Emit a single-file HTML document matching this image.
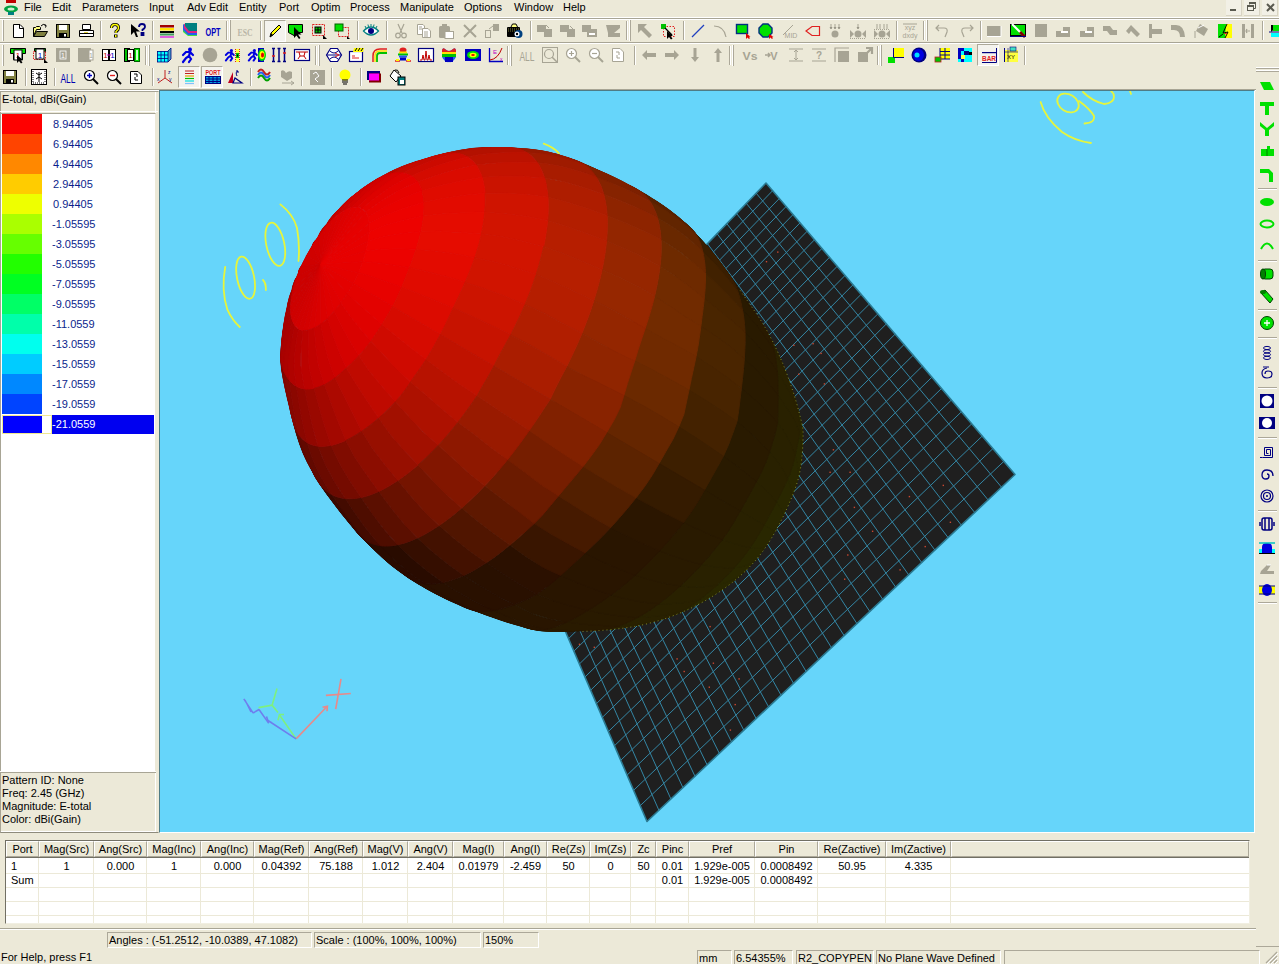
<!DOCTYPE html><html><head><meta charset="utf-8"><style>
*{margin:0;padding:0;box-sizing:border-box}
html,body{width:1279px;height:964px;overflow:hidden;background:#ECE9D8;font-family:"Liberation Sans", sans-serif;font-size:11px;color:#000;position:relative}
.a{position:absolute}
.t{position:absolute;white-space:nowrap;line-height:1;font-size:11px}
.hl{position:absolute;height:1px}
.vl{position:absolute;width:1px}
svg{position:absolute;overflow:visible}
</style></head><body>
<div class="t" style="left:24px;top:2px;font-size:11px">File</div>
<div class="t" style="left:52px;top:2px;font-size:11px">Edit</div>
<div class="t" style="left:82px;top:2px;font-size:11px">Parameters</div>
<div class="t" style="left:149px;top:2px;font-size:11px">Input</div>
<div class="t" style="left:187px;top:2px;font-size:11px">Adv Edit</div>
<div class="t" style="left:239px;top:2px;font-size:11px">Entity</div>
<div class="t" style="left:279px;top:2px;font-size:11px">Port</div>
<div class="t" style="left:311px;top:2px;font-size:11px">Optim</div>
<div class="t" style="left:350px;top:2px;font-size:11px">Process</div>
<div class="t" style="left:400px;top:2px;font-size:11px">Manipulate</div>
<div class="t" style="left:464px;top:2px;font-size:11px">Options</div>
<div class="t" style="left:514px;top:2px;font-size:11px">Window</div>
<div class="t" style="left:563px;top:2px;font-size:11px">Help</div>
<svg style="left:2px;top:0" width="18" height="16" viewBox="0 0 18 16">
<rect x="4" y="0" width="10" height="3" fill="#c00000"/>
<ellipse cx="9" cy="9" rx="7" ry="3.5" fill="#00a040"/>
<ellipse cx="9" cy="9" rx="3.5" ry="1.6" fill="#d0f0d0"/>
<rect x="6" y="12" width="6" height="3" fill="#008080"/>
</svg>
<div class="a" style="left:1226px;top:0;width:16px;height:16px;background:#F2F0E6;border-right:1px solid #D8D4C4;border-bottom:1px solid #D8D4C4"></div>
<div class="a" style="left:1244px;top:0;width:16px;height:16px;background:#F2F0E6;border-right:1px solid #D8D4C4;border-bottom:1px solid #D8D4C4"></div>
<div class="a" style="left:1262px;top:0;width:16px;height:16px;background:#F2F0E6;border-right:1px solid #D8D4C4;border-bottom:1px solid #D8D4C4"></div>
<div class="a" style="left:1230px;top:9px;width:6px;height:2px;background:#5a5a50"></div>
<svg style="left:1247px;top:2px" width="10" height="10"><rect x="0.5" y="3.5" width="6" height="5" fill="none" stroke="#5a5a50"/><rect x="0" y="3" width="7" height="2" fill="#5a5a50"/><path d="M2.5 2.5V0.5H8.5V6.5H7" fill="none" stroke="#5a5a50"/><rect x="2" y="0" width="7" height="2" fill="#5a5a50"/></svg>
<svg style="left:1266px;top:3px" width="9" height="9"><path d="M1 1L8 8M8 1L1 8" stroke="#5a5a50" stroke-width="2"/></svg>
<div class="hl" style="left:0;top:17px;width:1279px;background:#FFFFFF"></div>
<div class="hl" style="left:0;top:18px;width:1279px;background:#A8A595"></div>
<div class="hl" style="left:0;top:19px;width:1279px;background:#FFFFFF"></div>
<div class="hl" style="left:0;top:42px;width:1279px;background:#A8A595"></div>
<div class="hl" style="left:0;top:43px;width:1279px;background:#FFFFFF"></div>
<div class="hl" style="left:0;top:89px;width:1256px;background:#A8A595"></div>
<div class="hl" style="left:0;top:90px;width:1256px;background:#FFFFFF"></div>
<div class="a" style="left:2px;top:20px;width:2px;height:21px;border-left:1px solid #fff;border-right:1px solid #ACA899"></div>
<svg style="left:10px;top:23px" width="16" height="16" viewBox="0 0 16 16"><path d="M3.5 1.5H10L13.5 5V14.5H3.5Z" fill="#fff" stroke="#000"/><path d="M9.5 1.5V5.5H13.5" fill="none" stroke="#000"/></svg>
<svg style="left:32px;top:23px" width="16" height="16" viewBox="0 0 16 16"><path d="M1.5 6.5V13.5H12.5L15.5 8.5H4.5L1.5 13.5" fill="#808040" stroke="#000"/><path d="M1.5 13V4.5H3.5L4.5 3.5H7.5L8.5 4.5V6.5H4.5Z" fill="#FFFF80" stroke="#000"/><path d="M9 3Q11 0 14 2.5M12.5 1.5L14.2 2.6L13.5 4.5" fill="none" stroke="#000"/></svg>
<svg style="left:55px;top:23px" width="16" height="16" viewBox="0 0 16 16"><rect x="1.5" y="1.5" width="13" height="13" fill="#808040" stroke="#000"/><rect x="4" y="2" width="8" height="5" fill="#fff"/><rect x="4" y="10" width="8" height="4.5" fill="#000"/><rect x="9" y="11" width="2" height="2.5" fill="#fff"/></svg>
<svg style="left:78px;top:23px" width="16" height="16" viewBox="0 0 16 16"><path d="M4.5 1.5H12.5V6.5H4.5Z" fill="#fff" stroke="#000"/><path d="M1.5 7.5H15.5V13.5H1.5Z" fill="#fff" stroke="#000"/><rect x="2" y="10" width="13" height="1" fill="#000"/><rect x="6" y="9" width="4" height="1" fill="#E0D040"/></svg>
<div class="vl" style="left:100px;top:21px;height:19px;background:#ACA899"></div><div class="vl" style="left:101px;top:21px;height:19px;background:#fff"></div>
<svg style="left:107px;top:23px" width="16" height="16" viewBox="0 0 16 16"><path d="M4.5 5Q4.5 1.5 8 1.5Q11.5 1.5 11.5 5Q11.5 7 9 8.5V10" fill="none" stroke="#000" stroke-width="3"/><path d="M4.5 5Q4.5 1.5 8 1.5Q11.5 1.5 11.5 5Q11.5 7 9 8.5V10" fill="none" stroke="#FFFF00" stroke-width="1.4"/><rect x="7" y="11.5" width="3.5" height="3" fill="#000"/><rect x="8" y="12" width="1.5" height="2" fill="#FFFF00"/></svg>
<svg style="left:130px;top:23px" width="16" height="16" viewBox="0 0 16 16"><path d="M1 1V12L4 9L6 14H8L6 8.5H10Z" fill="#000"/><path d="M9 4Q9 1 12 1Q15 1 15 3.5Q15 5.5 12.5 6.5V8M11.5 10H13.5V12H11.5Z" fill="none" stroke="#000080" stroke-width="1.8"/></svg>
<div class="vl" style="left:152px;top:21px;height:19px;background:#ACA899"></div><div class="vl" style="left:153px;top:21px;height:19px;background:#fff"></div>
<svg style="left:159px;top:23px" width="16" height="16" viewBox="0 0 16 16"><rect x="1" y="2" width="14" height="2.5" fill="#A00000"/><rect x="1" y="5" width="14" height="2.5" fill="#FFE000"/><rect x="1" y="8" width="14" height="2" fill="#000"/><rect x="1" y="10.5" width="14" height="2" fill="#40A060"/><rect x="1" y="13" width="14" height="2" fill="#E060E0"/></svg>
<svg style="left:182px;top:23px" width="16" height="16" viewBox="0 0 16 16"><path d="M1 1L6 7L15 7V13H6L1 9Z" fill="#40E040"/><path d="M1 1L6 6H15V12H6L1 7Z" fill="#2060F0"/><path d="M2 0.5L6 4H15V10H6L2 5Z" fill="#E02080"/><path d="M3 0H15V8H7L3 3Z" fill="#008080"/></svg>
<svg style="left:205px;top:23px" width="16" height="16" viewBox="0 0 16 16"><text x="8" y="12.5" font-family="Liberation Sans" font-weight="bold" font-size="10" fill="#0000C0" text-anchor="middle" textLength="15" lengthAdjust="spacingAndGlyphs">OPT</text></svg>
<div class="vl" style="left:226px;top:21px;height:19px;background:#ACA899"></div><div class="vl" style="left:227px;top:21px;height:19px;background:#fff"></div>
<div class="a" style="left:229px;top:20px;width:2px;height:21px;border-left:1px solid #fff;border-right:1px solid #ACA899"></div>
<svg style="left:237px;top:23px" width="16" height="16" viewBox="0 0 16 16"><text x="8" y="13" font-family="Liberation Serif" font-weight="bold" font-size="11" fill="#B8B5A6" text-anchor="middle" textLength="15" lengthAdjust="spacingAndGlyphs">ESC</text></svg>
<div class="vl" style="left:260px;top:21px;height:19px;background:#ACA899"></div><div class="vl" style="left:261px;top:21px;height:19px;background:#fff"></div>
<div class="a" style="left:264px;top:20px;width:22px;height:22px;background:#F4F3EE;border-left:1px solid #ACA899;border-top:1px solid #ACA899;border-right:1px solid #fff;border-bottom:1px solid #fff"></div>
<svg style="left:267px;top:23px" width="16" height="16" viewBox="0 0 16 16"><path d="M3 14L4 10L12 2L14 4L6 12Z" fill="#FFFF00" stroke="#000"/><path d="M3 14L4 10L6 12Z" fill="#000"/></svg>
<svg style="left:288px;top:23px" width="16" height="16" viewBox="0 0 16 16"><path d="M0.5 1.5H14.5V9.5H8L6 12.5L0.5 9.5Z" fill="#00E000" stroke="#000"/><path d="M6 4L6 15L8.5 12.5L11 16L12.5 15L10 11.5H13.5Z" fill="#000"/></svg>
<svg style="left:311px;top:23px" width="16" height="16" viewBox="0 0 16 16"><rect x="1.5" y="1.5" width="12" height="11" fill="none" stroke="#E02020" stroke-dasharray="2 1"/><rect x="4" y="4" width="6" height="6" fill="#00C000" stroke="#000"/><path d="M7 4V10M4 7H10" stroke="#000"/><path d="M12 12L16 16H12Z" fill="#000"/></svg>
<svg style="left:334px;top:23px" width="16" height="16" viewBox="0 0 16 16"><rect x="4.5" y="4.5" width="10" height="9" fill="none" stroke="#E02020" stroke-dasharray="2 1"/><rect x="1" y="1" width="8" height="7" fill="#00E000" stroke="#006000"/><path d="M13 13L16 16H13Z" fill="#000"/></svg>
<div class="vl" style="left:357px;top:21px;height:19px;background:#ACA899"></div><div class="vl" style="left:358px;top:21px;height:19px;background:#fff"></div>
<svg style="left:363px;top:23px" width="16" height="16" viewBox="0 0 16 16"><path d="M0.5 8Q8 0 15.5 8Q8 16 0.5 8Z" fill="#fff" stroke="#008080" stroke-width="1.3"/><circle cx="8" cy="8" r="3" fill="#000080"/><path d="M2 3L3 5M5 1.5L5.5 4M8 1V3.5M11 1.5L10.5 4M14 3L13 5" stroke="#008080"/></svg>
<div class="vl" style="left:386px;top:21px;height:19px;background:#ACA899"></div><div class="vl" style="left:387px;top:21px;height:19px;background:#fff"></div>
<svg style="left:393px;top:23px" width="16" height="16" viewBox="0 0 16 16"><path d="M5 1L9 10M11 1L7 10" stroke="#A7A494" stroke-width="1.2"/><circle cx="5" cy="12.5" r="2.3" fill="none" stroke="#A7A494" stroke-width="1.2"/><circle cx="11" cy="12.5" r="2.3" fill="none" stroke="#A7A494" stroke-width="1.2"/></svg>
<svg style="left:416px;top:23px" width="16" height="16" viewBox="0 0 16 16"><path d="M1.5 1.5H7L8.5 3V11.5H1.5Z" fill="#fff" stroke="#A7A494"/><path d="M6.5 5.5H12L14.5 8V14.5H6.5Z" fill="#fff" stroke="#A7A494"/><path d="M3 4H6M3 6H6M8 9H12M8 11H12M8 13H12" stroke="#A7A494"/></svg>
<svg style="left:438px;top:23px" width="16" height="16" viewBox="0 0 16 16"><rect x="1" y="3" width="11" height="12" rx="1.5" fill="#A7A494"/><rect x="4" y="1" width="5" height="3" fill="#A7A494"/><rect x="7" y="8.5" width="8.5" height="7" fill="#fff" stroke="#A7A494"/></svg>
<svg style="left:462px;top:23px" width="16" height="16" viewBox="0 0 16 16"><path d="M2 2L14 14M14 2L2 14" stroke="#A7A494" stroke-width="2"/></svg>
<svg style="left:484px;top:23px" width="16" height="16" viewBox="0 0 16 16"><rect x="1.5" y="7.5" width="5" height="7" fill="none" stroke="#A7A494"/><rect x="9" y="1" width="6" height="7" fill="#A7A494"/><path d="M5 6L9 3" stroke="#A7A494"/></svg>
<svg style="left:507px;top:23px" width="16" height="16" viewBox="0 0 16 16"><rect x="0" y="4" width="13" height="10" rx="1" fill="#000"/><path d="M4 4L5.5 1H9L10.5 4" fill="#FFFF80" stroke="#000"/><circle cx="11.5" cy="11" r="4" fill="#004080"/><circle cx="10" cy="11" r="2.5" fill="#fff"/><circle cx="10" cy="11" r="1.2" fill="#000"/><path d="M1 6H12M1 8H8" stroke="#808040" stroke-dasharray="1 1"/></svg>
<div class="vl" style="left:530px;top:21px;height:19px;background:#ACA899"></div><div class="vl" style="left:531px;top:21px;height:19px;background:#fff"></div>
<svg style="left:537px;top:23px" width="16" height="16" viewBox="0 0 16 16"><path d="M0 2H9V6H15V14H7V9H0Z" fill="#A7A494"/><path d="M9 2L12 5" stroke="#A7A494"/></svg>
<svg style="left:560px;top:23px" width="16" height="16" viewBox="0 0 16 16"><path d="M0 2H9V6H15V14H7V9H0Z" fill="#A7A494"/><path d="M10 3L13 6" stroke="#A7A494"/></svg>
<svg style="left:582px;top:23px" width="16" height="16" viewBox="0 0 16 16"><path d="M0 2H9V6H15V14H5V9H0Z" fill="#A7A494"/><rect x="7" y="10" width="6" height="2" fill="#fff"/></svg>
<svg style="left:605px;top:23px" width="16" height="16" viewBox="0 0 16 16"><path d="M1 2H15V5L9 10H15V14H3V10Z" fill="#A7A494"/></svg>
<div class="vl" style="left:626px;top:21px;height:19px;background:#ACA899"></div><div class="vl" style="left:627px;top:21px;height:19px;background:#fff"></div>
<div class="a" style="left:629px;top:20px;width:2px;height:21px;border-left:1px solid #fff;border-right:1px solid #ACA899"></div>
<svg style="left:637px;top:23px" width="16" height="16" viewBox="0 0 16 16"><path d="M1 1H10L7 4L15 12L12 15L4 7L1 10Z" fill="#A7A494"/></svg>
<svg style="left:660px;top:23px" width="16" height="16" viewBox="0 0 16 16"><rect x="3.5" y="3.5" width="11" height="10" fill="none" stroke="#E02020" stroke-dasharray="1.5 1.5"/><rect x="1" y="1" width="5" height="5" fill="#00C000"/><path d="M5 5L12 12" stroke="#000" stroke-width="1.2"/><path d="M7 8V16L9 14L11 16.5L12.5 15.5L10.5 13H13Z" fill="#000"/></svg>
<div class="vl" style="left:683px;top:21px;height:19px;background:#ACA899"></div><div class="vl" style="left:684px;top:21px;height:19px;background:#fff"></div>
<svg style="left:690px;top:23px" width="16" height="16" viewBox="0 0 16 16"><path d="M2 14L14 2" stroke="#2040C0" stroke-width="1.2"/></svg>
<svg style="left:712px;top:23px" width="16" height="16" viewBox="0 0 16 16"><path d="M2 3Q12 3 14 14" fill="none" stroke="#A7A494" stroke-width="1.2"/></svg>
<svg style="left:735px;top:23px" width="16" height="16" viewBox="0 0 16 16"><rect x="1.5" y="1.5" width="11" height="9" fill="#00E000" stroke="#003080" stroke-width="1.4"/><path d="M11 10L11 16L12.5 14.5L14 16L15 15L13.8 13.7H15.5Z" fill="#E00000"/></svg>
<svg style="left:758px;top:23px" width="16" height="16" viewBox="0 0 16 16"><path d="M5 1H10L14 5V10L10 14H5L1 10V5Z" fill="#00E000" stroke="#003080" stroke-width="1.4"/><path d="M11 11L11 16L12.5 14.5L14 16L15 15L13.8 13.7H15.5Z" fill="#E00000"/></svg>
<svg style="left:782px;top:23px" width="16" height="16" viewBox="0 0 16 16"><path d="M1 12L11 2" stroke="#A7A494"/><text x="9" y="14.5" font-family="Liberation Sans" font-size="7" fill="#A7A494" text-anchor="middle">MID</text></svg>
<svg style="left:805px;top:23px" width="16" height="16" viewBox="0 0 16 16"><path d="M1 8L7 3.5H14.5V12.5H7Z" fill="none" stroke="#E02020" stroke-width="1.2"/></svg>
<svg style="left:827px;top:23px" width="16" height="16" viewBox="0 0 16 16"><path d="M4 1V6M8 1V6M12 1V6M3 4L4 6L5 4M7 4L8 6L9 4M11 4L12 6L13 4" stroke="#A7A494"/><circle cx="8" cy="11" r="3.5" fill="#A7A494"/></svg>
<svg style="left:850px;top:23px" width="16" height="16" viewBox="0 0 16 16"><path d="M8 1V6M7 4L8 6L9 4" stroke="#A7A494"/><circle cx="8" cy="11" r="3.5" fill="#A7A494"/><path d="M0 7L4 11L0 15ZM16 7L12 11L16 15Z" fill="#A7A494"/><path d="M0 15.5H16" stroke="#A7A494" stroke-dasharray="1 1"/></svg>
<svg style="left:874px;top:23px" width="16" height="16" viewBox="0 0 16 16"><path d="M3 1V6M6 1V6M10 1V6M13 1V6" stroke="#A7A494"/><circle cx="8" cy="11" r="3.5" fill="#A7A494"/><path d="M0 7L4 11L0 15ZM16 7L12 11L16 15Z" fill="#A7A494"/><path d="M0 15.5H16M0 6.5H16" stroke="#A7A494" stroke-dasharray="1 1"/></svg>
<div class="vl" style="left:896px;top:21px;height:19px;background:#ACA899"></div><div class="vl" style="left:897px;top:21px;height:19px;background:#fff"></div>
<svg style="left:902px;top:23px" width="16" height="16" viewBox="0 0 16 16"><text x="8" y="7" font-family="Liberation Sans" font-size="7" fill="#A7A494" text-anchor="middle">xyz</text><text x="8" y="15" font-family="Liberation Sans" font-size="7" fill="#A7A494" text-anchor="middle">dxdy</text><path d="M1 1H15" stroke="#A7A494"/></svg>
<div class="vl" style="left:923px;top:21px;height:19px;background:#ACA899"></div><div class="vl" style="left:924px;top:21px;height:19px;background:#fff"></div>
<div class="a" style="left:926px;top:20px;width:2px;height:21px;border-left:1px solid #fff;border-right:1px solid #ACA899"></div>
<svg style="left:935px;top:23px" width="16" height="16" viewBox="0 0 16 16"><path d="M4 2L1 5L4 8M1 5H9Q13 5 12 9L10 14" fill="none" stroke="#A7A494" stroke-width="1.2"/></svg>
<svg style="left:958px;top:23px" width="16" height="16" viewBox="0 0 16 16"><path d="M12 2L15 5L12 8M15 5H7Q3 5 4 9L6 14" fill="none" stroke="#A7A494" stroke-width="1.2"/></svg>
<div class="vl" style="left:980px;top:21px;height:19px;background:#ACA899"></div><div class="vl" style="left:981px;top:21px;height:19px;background:#fff"></div>
<svg style="left:986px;top:23px" width="16" height="16" viewBox="0 0 16 16"><rect x="1" y="3" width="14" height="10" fill="#A7A494"/><path d="M1 13.5H15M15 3V13.5" stroke="#fff"/></svg>
<svg style="left:1010px;top:23px" width="16" height="16" viewBox="0 0 16 16"><rect x="0.5" y="1.5" width="15" height="11" fill="#00E000" stroke="#000"/><path d="M2 1L13 12" stroke="#fff" stroke-width="2"/><path d="M9 10L14 15L16 13L11 8Z" fill="#800000"/><rect x="0" y="13" width="16" height="1" fill="#000080"/></svg>
<svg style="left:1033px;top:23px" width="16" height="16" viewBox="0 0 16 16"><rect x="2" y="1" width="12" height="13" fill="#A7A494"/></svg>
<svg style="left:1055px;top:23px" width="16" height="16" viewBox="0 0 16 16"><path d="M1 8H8V4H15V14H1Z" fill="#A7A494"/><rect x="6" y="8" width="7" height="2" fill="#fff"/></svg>
<svg style="left:1079px;top:23px" width="16" height="16" viewBox="0 0 16 16"><path d="M1 8H8V4H15V14H1Z" fill="#A7A494"/><rect x="6" y="8" width="7" height="2" fill="#fff"/></svg>
<svg style="left:1102px;top:23px" width="16" height="16" viewBox="0 0 16 16"><path d="M1 3H8L11 7H15V12H8L5 8H1Z" fill="#A7A494"/></svg>
<svg style="left:1125px;top:23px" width="16" height="16" viewBox="0 0 16 16"><path d="M1 8L6 2L15 11L12 14L6 8L4 11Z" fill="#A7A494"/></svg>
<svg style="left:1147px;top:23px" width="16" height="16" viewBox="0 0 16 16"><path d="M2 1H5V6H15V11H5V15H2Z" fill="#A7A494"/></svg>
<svg style="left:1170px;top:23px" width="16" height="16" viewBox="0 0 16 16"><path d="M1 2H6Q14 2 15 14H10Q10 7 4 7H1Z" fill="#A7A494"/></svg>
<svg style="left:1194px;top:23px" width="16" height="16" viewBox="0 0 16 16"><path d="M6 1L14 6L10 13L2 8Z" fill="#A7A494"/><path d="M4 5L10 2" stroke="#fff"/><path d="M1 8V15" stroke="#A7A494"/></svg>
<svg style="left:1217px;top:23px" width="16" height="16" viewBox="0 0 16 16"><rect x="1" y="1" width="14" height="14" fill="#00E000"/><path d="M9 1H15V15H8Z" fill="#FFFF00"/><path d="M10 1L6 10L11 9L8 15" fill="none" stroke="#000"/><path d="M2 14L6 11" stroke="#000"/><path d="M7 10L10 11" stroke="#E02020"/></svg>
<svg style="left:1240px;top:23px" width="16" height="16" viewBox="0 0 16 16"><path d="M2 1H5V15H2ZM11 1H14V15H11Z" fill="#A7A494"/><path d="M6 8L10 8M7 6L6 8L7 10" stroke="#A7A494" stroke-width="1.2"/></svg>
<div class="vl" style="left:1262px;top:21px;height:19px;background:#ACA899"></div><div class="vl" style="left:1263px;top:21px;height:19px;background:#fff"></div>
<svg style="left:1269px;top:23px" width="16" height="16" viewBox="0 0 16 16"><path d="M2 2L10 2L2 9Z" fill="#000"/><path d="M4 2H10V8H4Z" fill="#00E000"/><rect x="2" y="10" width="8" height="4" fill="#00FFFF"/><path d="M0 9H10" stroke="#000080"/></svg>
<div class="a" style="left:2px;top:45px;width:2px;height:21px;border-left:1px solid #fff;border-right:1px solid #ACA899"></div>
<svg style="left:10px;top:47px" width="16" height="16" viewBox="0 0 16 16"><path d="M0.5 1.5H15.5V6.5H12.5V12.5H3.5V6.5H0.5Z" fill="#00E000" stroke="#000"/><rect x="4" y="3" width="8" height="10" fill="#fff" stroke="#000"/><text x="8" y="11" font-family="Liberation Sans" font-size="8" fill="#E00000" text-anchor="middle">1</text><path d="M7 8L7 16L9 14L11 16.5L12.5 15.5L10.5 13H13Z" fill="#000"/></svg>
<svg style="left:32px;top:47px" width="16" height="16" viewBox="0 0 16 16"><path d="M2.5 1.5H13.5V4.5H2.5Z" fill="#00E000" stroke="#000"/><rect x="1.5" y="4.5" width="12" height="8" fill="none" stroke="#E02020" stroke-dasharray="1.5 1"/><rect x="4" y="2" width="8" height="10" fill="#fff" stroke="#000"/><text x="8" y="10.5" font-family="Liberation Sans" font-size="8" fill="#0000C0" text-anchor="middle">1</text><path d="M12 12L16 16H12Z" fill="#000"/></svg>
<svg style="left:55px;top:47px" width="16" height="16" viewBox="0 0 16 16"><rect x="1" y="1" width="14" height="14" fill="#A7A494"/><rect x="5" y="4" width="6" height="8" fill="none" stroke="#fff" stroke-width="0.8"/><text x="8" y="11" font-family="Liberation Sans" font-size="7" fill="#fff" text-anchor="middle">1</text></svg>
<svg style="left:78px;top:47px" width="16" height="16" viewBox="0 0 16 16"><rect x="0" y="1" width="13" height="14" fill="#A7A494"/><rect x="11" y="3" width="4" height="10" fill="#fff" stroke="#A7A494"/><text x="13" y="11" font-family="Liberation Sans" font-size="7" fill="#A7A494" text-anchor="middle">1</text></svg>
<svg style="left:101px;top:47px" width="16" height="16" viewBox="0 0 16 16"><rect x="1.5" y="2.5" width="6" height="11" fill="#fff" stroke="#000"/><rect x="8.5" y="2.5" width="6" height="11" fill="#fff" stroke="#000"/><text x="4.5" y="11" font-family="Liberation Sans" font-size="8" fill="#C00000" text-anchor="middle">1</text><text x="11.5" y="11" font-family="Liberation Sans" font-size="8" fill="#0000C0" text-anchor="middle">1</text><path d="M6 8H10" stroke="#C000C0"/></svg>
<svg style="left:124px;top:47px" width="16" height="16" viewBox="0 0 16 16"><rect x="0.5" y="1.5" width="5" height="13" fill="#00C000" stroke="#000"/><rect x="3.5" y="2.5" width="6" height="11" fill="#fff" stroke="#000"/><text x="6.5" y="11" font-family="Liberation Sans" font-size="8" fill="#C00000" text-anchor="middle">1</text><rect x="10.5" y="1.5" width="5" height="13" fill="#00E000" stroke="#006000"/><rect x="12" y="3" width="2" height="10" fill="#D0FFD0"/></svg>
<div class="vl" style="left:145px;top:46px;height:19px;background:#ACA899"></div><div class="vl" style="left:146px;top:46px;height:19px;background:#fff"></div>
<div class="a" style="left:148px;top:45px;width:2px;height:21px;border-left:1px solid #fff;border-right:1px solid #ACA899"></div>
<svg style="left:156px;top:47px" width="16" height="16" viewBox="0 0 16 16"><path d="M1 4H12L15 1V12L12 15H1Z" fill="#00FFFF"/><path d="M12 4L15 1V12L12 15Z" fill="#40A0C0"/><path d="M1 4.5H12M1 8H12M1 11.5H12M1 15H12M1.5 4V15M5 4V15M8.5 4V15M12 4V15M12 4L15 1V12L12 15" stroke="#000080" stroke-width="0.8" fill="none"/></svg>
<svg style="left:179px;top:47px" width="16" height="16" viewBox="0 0 16 16"><circle cx="11" cy="2.5" r="2" fill="#0000E0"/><path d="M7 5L11 5L10 9L12 12L10 15M10 9L7 11L4 15M7 5L4 8M11 5L14 8" fill="none" stroke="#0000E0" stroke-width="2.2" stroke-linecap="round"/></svg>
<svg style="left:202px;top:47px" width="16" height="16" viewBox="0 0 16 16"><circle cx="8" cy="8" r="7.3" fill="#A7A494"/></svg>
<svg style="left:225px;top:47px" width="16" height="16" viewBox="0 0 16 16"><g transform="scale(0.8) translate(0,2)"><circle cx="8" cy="2.5" r="2" fill="#0000E0"/><path d="M4 5L8 5L7 9L9 12L7 15M7 9L4 11L1 15M4 5L1 8M8 5L11 8" fill="none" stroke="#0000E0" stroke-width="2.4" stroke-linecap="round"/></g><rect x="11" y="2" width="3" height="13" fill="#FFFF40"/><rect x="11" y="6" width="3" height="5" fill="#00C000"/><rect x="12" y="7.5" width="1" height="2" fill="#000"/><path d="M10.5 2V15M14.5 2V15" stroke="#E02020" stroke-dasharray="1 1"/></svg>
<svg style="left:248px;top:47px" width="16" height="16" viewBox="0 0 16 16"><g transform="scale(0.8) translate(0,2)"><circle cx="8" cy="2.5" r="2" fill="#0000E0"/><path d="M4 5L8 5L7 9L9 12L7 15M7 9L4 11L1 15M4 5L1 8M8 5L11 8" fill="none" stroke="#0000E0" stroke-width="2.4" stroke-linecap="round"/></g><rect x="10" y="1" width="6" height="14" fill="#0000C0"/><ellipse cx="14" cy="8" rx="4" ry="6" fill="#00E000"/><ellipse cx="14" cy="8" rx="2.5" ry="4" fill="#FFFF00"/><ellipse cx="14.5" cy="8" rx="1.5" ry="2.5" fill="#E00000"/></svg>
<svg style="left:271px;top:47px" width="16" height="16" viewBox="0 0 16 16"><path d="M1 1.5H4M1 14.5H4M2.5 1.5V14.5M6.5 1.5H9.5M6.5 14.5H9.5M8 1.5V14.5M12 1.5H15M12 14.5H15M13.5 1.5V14.5" stroke="#000080" stroke-width="1.5"/><path d="M1 9H4M12 6H15" stroke="#E02020" stroke-width="1.5"/></svg>
<svg style="left:294px;top:47px" width="16" height="16" viewBox="0 0 16 16"><rect x="0.5" y="2.5" width="15" height="11" fill="#fff" stroke="#000080" stroke-width="1.2"/><path d="M2 5H14M5 5L6 9L4 12M11 5L10 9L12 12M6 9H10" fill="none" stroke="#C00000"/></svg>
<div class="vl" style="left:315px;top:46px;height:19px;background:#ACA899"></div><div class="vl" style="left:316px;top:46px;height:19px;background:#fff"></div>
<div class="a" style="left:318px;top:45px;width:2px;height:21px;border-left:1px solid #fff;border-right:1px solid #ACA899"></div>
<svg style="left:326px;top:47px" width="16" height="16" viewBox="0 0 16 16"><path d="M4.5 1.5H11.5L15.5 8L11.5 14.5H4.5L0.5 8Z" fill="#fff" stroke="#000080" stroke-width="1.2"/><path d="M1 8H15M4 4Q8 8 12 4M4 12Q8 8 12 12" fill="none" stroke="#000080"/><path d="M9 6L13 8L9 10" fill="none" stroke="#E02020"/></svg>
<svg style="left:349px;top:47px" width="16" height="16" viewBox="0 0 16 16"><rect x="0.5" y="4.5" width="13" height="10" fill="#fff" stroke="#000080" stroke-width="1.2"/><path d="M5 1L15 1L14 5L4 5Z" fill="#FFFF00"/><path d="M6 4L8 1M9 4L11 1M12 4L14 1" stroke="#000"/><path d="M3 9H6M3 11H10" stroke="#E02020"/></svg>
<svg style="left:372px;top:47px" width="16" height="16" viewBox="0 0 16 16"><path d="M1 15V9Q1 2 8 2H15" fill="none" stroke="#E02020" stroke-width="1.5"/><path d="M3 15V9Q3 4 8 4H15" fill="none" stroke="#FFE000" stroke-width="1.5"/><path d="M5 15V9Q5 6 8 6H15" fill="none" stroke="#00C000" stroke-width="1.8"/></svg>
<svg style="left:395px;top:47px" width="16" height="16" viewBox="0 0 16 16"><ellipse cx="8" cy="3" rx="3.5" ry="2.5" fill="#E02020"/><rect x="4" y="4.5" width="8" height="2" fill="#FFE000"/><rect x="3" y="6.5" width="10" height="2" fill="#00C000"/><rect x="4" y="8.5" width="8" height="2" fill="#2060F0"/><rect x="5" y="10.5" width="6" height="3" fill="#0000C0"/><path d="M0 14H5M11 14H16" stroke="#E02020" stroke-width="1.5"/><rect x="1" y="12" width="3" height="2" fill="#FFFF00"/><rect x="12" y="12" width="3" height="2" fill="#FFFF00"/></svg>
<svg style="left:418px;top:47px" width="16" height="16" viewBox="0 0 16 16"><rect x="0.5" y="1.5" width="15" height="13" fill="#fff" stroke="#000080" stroke-width="1.2"/><path d="M2 13H4L5 8L6 13H7L8 4L9 13H10L11 8L12 13H14" fill="none" stroke="#C00000"/></svg>
<svg style="left:441px;top:47px" width="16" height="16" viewBox="0 0 16 16"><path d="M1 3Q2 0 4 2Q8 6 12 2Q14 0 15 3V10Q12 16 8 15Q4 16 1 10Z" fill="#2060F0"/><path d="M1 3Q2 0 4 2Q8 6 12 2Q14 0 15 3V6H1Z" fill="#E02020"/><path d="M1 5H15V7H1Z" fill="#FFE000"/><path d="M1 7H15V10H1Z" fill="#00C000"/><path d="M4 10H12V15H4Z" fill="#0000C0"/></svg>
<svg style="left:465px;top:47px" width="16" height="16" viewBox="0 0 16 16"><rect x="0" y="2" width="16" height="12" fill="#0000C0"/><ellipse cx="8" cy="8" rx="6" ry="4" fill="#00E000"/><ellipse cx="8" cy="8" rx="3.5" ry="2.3" fill="#FFFF00"/><ellipse cx="8" cy="8" rx="1.8" ry="1" fill="#E00000"/></svg>
<svg style="left:488px;top:47px" width="16" height="16" viewBox="0 0 16 16"><path d="M1.5 1V14.5H15" fill="none" stroke="#0000C0" stroke-width="1.3"/><path d="M2 13Q10 12 14 1" fill="none" stroke="#C00000"/><text x="5" y="7" font-family="Liberation Sans" font-size="6" fill="#C000C0">E</text><text x="12" y="14" font-family="Liberation Sans" font-size="5" fill="#C000C0">x</text></svg>
<div class="vl" style="left:507px;top:46px;height:19px;background:#ACA899"></div><div class="vl" style="left:508px;top:46px;height:19px;background:#fff"></div>
<div class="a" style="left:510px;top:45px;width:2px;height:21px;border-left:1px solid #fff;border-right:1px solid #ACA899"></div>
<svg style="left:519px;top:47px" width="16" height="16" viewBox="0 0 16 16"><text x="8" y="13.5" font-family="Liberation Sans" font-size="12" fill="#A7A494" text-anchor="middle" textLength="15" lengthAdjust="spacingAndGlyphs">ALL</text></svg>
<svg style="left:542px;top:47px" width="16" height="16" viewBox="0 0 16 16"><rect x="0.5" y="0.5" width="15" height="15" fill="none" stroke="#A7A494"/><circle cx="7" cy="7" r="4.5" fill="none" stroke="#A7A494" stroke-width="1.2"/><path d="M10 10L15 15" stroke="#A7A494" stroke-width="1.5"/></svg>
<svg style="left:565px;top:47px" width="16" height="16" viewBox="0 0 16 16"><circle cx="6.5" cy="6.5" r="5" fill="#fff" stroke="#A7A494" stroke-width="1.2"/><path d="M4 6.5H9M6.5 4V9" stroke="#A7A494" stroke-width="1.2"/><path d="M10 10L15 15" stroke="#A7A494" stroke-width="2"/></svg>
<svg style="left:588px;top:47px" width="16" height="16" viewBox="0 0 16 16"><circle cx="6.5" cy="6.5" r="5" fill="#fff" stroke="#A7A494" stroke-width="1.2"/><path d="M4 6.5H9" stroke="#A7A494" stroke-width="1.2"/><path d="M10 10L15 15" stroke="#A7A494" stroke-width="2"/></svg>
<svg style="left:611px;top:47px" width="16" height="16" viewBox="0 0 16 16"><path d="M1.5 1.5H9L12.5 5V14.5H1.5Z" fill="#fff" stroke="#A7A494"/><path d="M5 5L8 5L8 8M9 11H6V8" fill="none" stroke="#A7A494"/></svg>
<div class="vl" style="left:634px;top:46px;height:19px;background:#ACA899"></div><div class="vl" style="left:635px;top:46px;height:19px;background:#fff"></div>
<svg style="left:641px;top:47px" width="16" height="16" viewBox="0 0 16 16"><path d="M1 8L6 3V6H15V10H6V13Z" fill="#A7A494"/></svg>
<svg style="left:664px;top:47px" width="16" height="16" viewBox="0 0 16 16"><path d="M15 8L10 3V6H1V10H10V13Z" fill="#A7A494"/></svg>
<svg style="left:687px;top:47px" width="16" height="16" viewBox="0 0 16 16"><path d="M8 15L4 10H6.5V1H9.5V10H12Z" fill="#A7A494"/></svg>
<svg style="left:710px;top:47px" width="16" height="16" viewBox="0 0 16 16"><path d="M8 1L4 6H6.5V15H9.5V6H12Z" fill="#A7A494"/></svg>
<div class="vl" style="left:729px;top:46px;height:19px;background:#ACA899"></div><div class="vl" style="left:730px;top:46px;height:19px;background:#fff"></div>
<div class="a" style="left:732px;top:45px;width:2px;height:21px;border-left:1px solid #fff;border-right:1px solid #ACA899"></div>
<svg style="left:742px;top:47px" width="16" height="16" viewBox="0 0 16 16"><text x="8" y="13" font-family="Liberation Sans" font-weight="bold" font-size="11" fill="#A7A494" text-anchor="middle" textLength="15" lengthAdjust="spacingAndGlyphs">Vs</text></svg>
<svg style="left:765px;top:47px" width="16" height="16" viewBox="0 0 16 16"><text x="9" y="13" font-family="Liberation Sans" font-weight="bold" font-size="11" fill="#A7A494" text-anchor="middle">V</text><path d="M0 8H4M3 6L5 8L3 10" stroke="#A7A494" stroke-width="1.5" fill="none"/></svg>
<svg style="left:788px;top:47px" width="16" height="16" viewBox="0 0 16 16"><path d="M1 2H15M1 14H15M8 3V13M6 5L8 3L10 5M6 11L8 13L10 11" stroke="#A7A494" fill="none"/></svg>
<svg style="left:811px;top:47px" width="16" height="16" viewBox="0 0 16 16"><path d="M1 2H15M1 14H15" stroke="#A7A494"/><text x="8" y="12" font-family="Liberation Sans" font-weight="bold" font-size="10" fill="#A7A494" text-anchor="middle">?</text></svg>
<svg style="left:834px;top:47px" width="16" height="16" viewBox="0 0 16 16"><path d="M1 15V1H15" fill="none" stroke="#A7A494" stroke-width="1.2"/><rect x="4" y="4" width="11" height="11" fill="#A7A494"/></svg>
<svg style="left:857px;top:47px" width="16" height="16" viewBox="0 0 16 16"><rect x="1" y="5" width="10" height="10" fill="#A7A494"/><path d="M7 9L14 2M9 1H15V7" stroke="#A7A494" stroke-width="2.2" fill="none"/></svg>
<div class="vl" style="left:877px;top:46px;height:19px;background:#ACA899"></div><div class="vl" style="left:878px;top:46px;height:19px;background:#fff"></div>
<div class="a" style="left:880px;top:45px;width:2px;height:21px;border-left:1px solid #fff;border-right:1px solid #ACA899"></div>
<svg style="left:888px;top:47px" width="16" height="16" viewBox="0 0 16 16"><rect x="0" y="10" width="7" height="6" fill="#00E000"/><rect x="6" y="1" width="10" height="10" fill="#FFFF00"/><path d="M5.5 1V10.5H16" stroke="#000080" fill="none"/></svg>
<svg style="left:911px;top:47px" width="16" height="16" viewBox="0 0 16 16"><ellipse cx="8" cy="8" rx="7.5" ry="7.5" fill="#000080"/><ellipse cx="7.5" cy="8" rx="5.5" ry="6" fill="#0000E0"/><circle cx="6" cy="8" r="2.5" fill="#00E0FF"/></svg>
<svg style="left:934px;top:47px" width="16" height="16" viewBox="0 0 16 16"><rect x="6" y="1" width="10" height="11" fill="#FFFF00"/><path d="M6 1V12M11 1V12M6 4.5H16M6 8H16M3 12H16" stroke="#000080"/><rect x="1" y="10" width="6" height="5" fill="#00C000" stroke="#C02020" stroke-width="0.8"/></svg>
<svg style="left:957px;top:47px" width="16" height="16" viewBox="0 0 16 16"><rect x="1" y="1" width="14" height="14" fill="#00FFFF"/><path d="M1 1H7V4H4V8H1Z" fill="#0000C0"/><path d="M7 4H12V8H7Z" fill="#000080"/><path d="M1 8H7V15H4V12H1Z" fill="#0000C0"/><rect x="4" y="8" width="4" height="4" fill="#FFFF40"/><rect x="12" y="5" width="3" height="3" fill="#000"/></svg>
<div class="a" style="left:977px;top:44px;width:22px;height:22px;background:#F4F3EE;border-left:1px solid #ACA899;border-top:1px solid #ACA899;border-right:1px solid #fff;border-bottom:1px solid #fff"></div>
<svg style="left:981px;top:47px" width="16" height="16" viewBox="0 0 16 16"><path d="M15.5 1V15.5H1" fill="none" stroke="#000080"/><rect x="1" y="5" width="14" height="1.2" fill="#000080"/><text x="8" y="13.5" font-family="Liberation Sans" font-weight="bold" font-size="7" fill="#E02020" text-anchor="middle" textLength="14" lengthAdjust="spacingAndGlyphs">BAR</text></svg>
<svg style="left:1003px;top:47px" width="16" height="16" viewBox="0 0 16 16"><rect x="1" y="3" width="14" height="12" fill="#FFFF40"/><path d="M1.5 1V15" stroke="#000080"/><rect x="7" y="0" width="6" height="4" fill="#40E0C0" stroke="#000080" stroke-width="0.6"/><path d="M5 1V15M1 5H15" stroke="#000080" stroke-width="0.6"/><text x="8" y="12" font-family="Liberation Sans" font-size="6" fill="#000" text-anchor="middle">XY</text></svg>
<div class="vl" style="left:1024px;top:46px;height:19px;background:#ACA899"></div><div class="vl" style="left:1025px;top:46px;height:19px;background:#fff"></div>
<svg style="left:2px;top:69px" width="16" height="16" viewBox="0 0 16 16"><rect x="1.5" y="1.5" width="13" height="13" fill="#808040" stroke="#000"/><rect x="4" y="2" width="8" height="5" fill="#fff"/><rect x="4" y="10" width="8" height="4.5" fill="#000"/><rect x="9" y="11" width="2" height="2.5" fill="#fff"/></svg>
<div class="vl" style="left:25px;top:68px;height:18px;background:#ACA899"></div><div class="vl" style="left:26px;top:68px;height:18px;background:#fff"></div>
<svg style="left:31px;top:69px" width="16" height="16" viewBox="0 0 16 16"><rect x="0.5" y="0.5" width="15" height="15" fill="#fff" stroke="#000"/><path d="M2 2V14M14 2V14M2 14H14" stroke="#000" stroke-dasharray="1 1"/><path d="M5 4L8 6L11 4M5 10L8 8L11 10M8 3V13" stroke="#000" fill="none"/></svg>
<div class="vl" style="left:54px;top:68px;height:18px;background:#ACA899"></div><div class="vl" style="left:55px;top:68px;height:18px;background:#fff"></div>
<svg style="left:60px;top:69px" width="16" height="16" viewBox="0 0 16 16"><text x="8" y="13.5" font-family="Liberation Sans" font-size="12" fill="#0000B0" text-anchor="middle" textLength="15" lengthAdjust="spacingAndGlyphs">ALL</text></svg>
<svg style="left:83px;top:69px" width="16" height="16" viewBox="0 0 16 16"><circle cx="6.5" cy="6.5" r="5" fill="#fff" stroke="#000" stroke-width="1.2"/><path d="M4 6.5H9M6.5 4V9" stroke="#0000C0" stroke-width="1.4"/><path d="M10 10L15 15" stroke="#000" stroke-width="2"/></svg>
<svg style="left:106px;top:69px" width="16" height="16" viewBox="0 0 16 16"><circle cx="6.5" cy="6.5" r="5" fill="#fff" stroke="#000" stroke-width="1.2"/><path d="M4 6.5H9" stroke="#E02020" stroke-width="1.4"/><path d="M10 10L15 15" stroke="#000" stroke-width="2"/></svg>
<svg style="left:129px;top:69px" width="16" height="16" viewBox="0 0 16 16"><path d="M1.5 2.5H9L12.5 6V14.5H1.5Z" fill="#fff" stroke="#000"/><path d="M5 5L8 5L8 8M9 11H6V8" fill="none" stroke="#000"/></svg>
<div class="vl" style="left:152px;top:68px;height:18px;background:#ACA899"></div><div class="vl" style="left:153px;top:68px;height:18px;background:#fff"></div>
<svg style="left:157px;top:69px" width="16" height="16" viewBox="0 0 16 16"><path d="M8 9L8 1M8 9L1 14M8 9L15 14" stroke="#C02020" fill="none"/><text x="11" y="5" font-family="Liberation Sans" font-size="5" fill="#000080">z</text><text x="0" y="12" font-family="Liberation Sans" font-size="5" fill="#000080">x</text><text x="12" y="12" font-family="Liberation Sans" font-size="5" fill="#000080">y</text></svg>
<div class="a" style="left:178px;top:66px;width:22px;height:22px;background:#F4F3EE;border-left:1px solid #ACA899;border-top:1px solid #ACA899;border-right:1px solid #fff;border-bottom:1px solid #fff"></div>
<svg style="left:182px;top:69px" width="16" height="16" viewBox="0 0 16 16"><path d="M3 2H12M3 4.5H12" stroke="#C02020" stroke-width="1.2"/><path d="M3 7H12" stroke="#E0A000" stroke-width="1.2"/><path d="M3 9.5H12" stroke="#00C000" stroke-width="1.2"/><path d="M3 12H12" stroke="#00E0E0" stroke-width="1.2"/><path d="M3 14.5H12" stroke="#80C0FF" stroke-width="1.2"/></svg>
<div class="a" style="left:201px;top:66px;width:22px;height:22px;background:#F4F3EE;border-left:1px solid #ACA899;border-top:1px solid #ACA899;border-right:1px solid #fff;border-bottom:1px solid #fff"></div>
<svg style="left:205px;top:69px" width="16" height="16" viewBox="0 0 16 16"><text x="8" y="6" font-family="Liberation Sans" font-weight="bold" font-size="6.5" fill="#E02020" text-anchor="middle" textLength="15" lengthAdjust="spacingAndGlyphs">PORT</text><rect x="0.5" y="7.5" width="15" height="7" fill="#00A0E0" stroke="#000080"/><path d="M0.5 10H15.5M0.5 12.5H15.5M4 7.5V14.5M8 7.5V14.5M12 7.5V14.5" stroke="#000080"/></svg>
<svg style="left:227px;top:69px" width="16" height="16" viewBox="0 0 16 16"><path d="M1 14L6 3V14Z" fill="#C00020"/><path d="M6 14H15L8 9Z" fill="none" stroke="#000080" stroke-width="1.2"/><path d="M10 7Q8 3 11 2M9 2L11 2L11 4" fill="none" stroke="#000080"/></svg>
<div class="vl" style="left:250px;top:68px;height:18px;background:#ACA899"></div><div class="vl" style="left:251px;top:68px;height:18px;background:#fff"></div>
<svg style="left:257px;top:69px" width="16" height="16" viewBox="0 0 16 16"><path d="M1 6Q4 1 7 6Q10 11 13 6" fill="none" stroke="#2060F0" stroke-width="2"/><path d="M1 9Q4 4 7 9Q10 14 13 9" fill="none" stroke="#00A000" stroke-width="2"/><path d="M1 3Q4 -2 7 3Q10 8 13 3" fill="none" stroke="#C02020" stroke-width="2"/></svg>
<svg style="left:280px;top:69px" width="16" height="16" viewBox="0 0 16 16"><path d="M1 2Q4 0 6 4Q9 1 12 3V9L7 12L1 8Z" fill="#A7A494"/><path d="M2 14H14M11 12L14 14L11 16" stroke="#A7A494" fill="none"/></svg>
<div class="vl" style="left:301px;top:68px;height:18px;background:#ACA899"></div><div class="vl" style="left:302px;top:68px;height:18px;background:#fff"></div>
<svg style="left:309px;top:69px" width="16" height="16" viewBox="0 0 16 16"><rect x="1" y="1" width="15" height="15" fill="#A7A494"/><path d="M4 5L7 3L10 7L6 10L9 13" stroke="#fff" fill="none"/></svg>
<div class="vl" style="left:331px;top:68px;height:18px;background:#ACA899"></div><div class="vl" style="left:332px;top:68px;height:18px;background:#fff"></div>
<svg style="left:338px;top:69px" width="16" height="16" viewBox="0 0 16 16"><circle cx="7" cy="6" r="5.5" fill="#FFFF00"/><path d="M4 11H10M4 13H10M5 15H9" stroke="#000" stroke-width="1.2"/></svg>
<div class="vl" style="left:360px;top:68px;height:18px;background:#ACA899"></div><div class="vl" style="left:361px;top:68px;height:18px;background:#fff"></div>
<svg style="left:366px;top:69px" width="16" height="16" viewBox="0 0 16 16"><rect x="1" y="2" width="13" height="9" fill="#000080"/><rect x="3" y="4.5" width="12" height="9" fill="#800000"/><rect x="3" y="4.5" width="10" height="7" fill="#FF00FF"/></svg>
<svg style="left:389px;top:69px" width="16" height="16" viewBox="0 0 16 16"><path d="M5 1L1 7L7 13L12 7Z" fill="#fff" stroke="#000"/><path d="M6 1Q9 0 10 4" fill="none" stroke="#000"/><rect x="9" y="8" width="7" height="8" fill="#008080" stroke="#000"/><rect x="11" y="11" width="4" height="4" fill="#fff"/></svg>
<div class="hl" style="left:1256px;top:67px;width:23px;background:#fff"></div><div class="hl" style="left:1256px;top:68px;width:23px;background:#ACA899"></div><div class="hl" style="left:1256px;top:70px;width:23px;background:#fff"></div><div class="hl" style="left:1256px;top:71px;width:23px;background:#ACA899"></div>
<svg style="left:1259px;top:78px" width="16" height="16" viewBox="0 0 16 16"><path d="M1 4H11L15 12H5Z" fill="#00E000"/></svg>
<svg style="left:1259px;top:100px" width="16" height="16" viewBox="0 0 16 16"><path d="M1 2H15V6H10V15H6V6H1Z" fill="#00E000"/></svg>
<svg style="left:1259px;top:121px" width="16" height="16" viewBox="0 0 16 16"><path d="M1 1L8 7L15 1V5L10 9V15H6V9L1 5Z" fill="#00E000"/></svg>
<svg style="left:1259px;top:144px" width="16" height="16" viewBox="0 0 16 16"><path d="M2 5H8V2H11V5H15V12H2Z" fill="#00E000"/><path d="M8 12V5" stroke="#008000"/></svg>
<svg style="left:1259px;top:167px" width="16" height="16" viewBox="0 0 16 16"><path d="M1 2H10L14 6V15H10V7L9 6H1Z" fill="#00E000"/></svg>
<div class="hl" style="left:1258px;top:188px;width:19px;background:#ACA899"></div><div class="hl" style="left:1258px;top:189px;width:19px;background:#fff"></div>
<svg style="left:1259px;top:194px" width="16" height="16" viewBox="0 0 16 16"><ellipse cx="8" cy="8" rx="7" ry="4" fill="#00E000"/></svg>
<svg style="left:1259px;top:216px" width="16" height="16" viewBox="0 0 16 16"><ellipse cx="8" cy="8" rx="6.5" ry="3.5" fill="none" stroke="#00E000" stroke-width="2"/></svg>
<svg style="left:1259px;top:237px" width="16" height="16" viewBox="0 0 16 16"><path d="M2 12Q8 1 14 12" fill="none" stroke="#00E000" stroke-width="2"/></svg>
<div class="hl" style="left:1258px;top:260px;width:19px;background:#ACA899"></div><div class="hl" style="left:1258px;top:261px;width:19px;background:#fff"></div>
<svg style="left:1259px;top:266px" width="16" height="16" viewBox="0 0 16 16"><rect x="3" y="3" width="11" height="10" rx="3" fill="#00E000" stroke="#004000"/><ellipse cx="4" cy="8" rx="2.5" ry="5" fill="#008000" stroke="#004000"/></svg>
<svg style="left:1259px;top:289px" width="16" height="16" viewBox="0 0 16 16"><path d="M2 4L6 1L14 10L11 14Z" fill="#00E000" stroke="#004000"/><ellipse cx="4" cy="3" rx="3" ry="2" fill="#008000"/></svg>
<div class="hl" style="left:1258px;top:309px;width:19px;background:#ACA899"></div><div class="hl" style="left:1258px;top:310px;width:19px;background:#fff"></div>
<svg style="left:1259px;top:315px" width="16" height="16" viewBox="0 0 16 16"><circle cx="8" cy="8" r="6.5" fill="#00E000" stroke="#004000"/><path d="M5 8H11M8 5V11" stroke="#fff" stroke-width="1.3"/></svg>
<div class="hl" style="left:1258px;top:337px;width:19px;background:#ACA899"></div><div class="hl" style="left:1258px;top:338px;width:19px;background:#fff"></div>
<svg style="left:1259px;top:345px" width="16" height="16" viewBox="0 0 16 16"><ellipse cx="8" cy="3" rx="3.5" ry="1.6" fill="none" stroke="#000080"/><ellipse cx="8" cy="6.3" rx="3.5" ry="1.6" fill="none" stroke="#000080"/><ellipse cx="8" cy="9.6" rx="3.5" ry="1.6" fill="none" stroke="#000080"/><ellipse cx="8" cy="12.9" rx="3.5" ry="1.6" fill="none" stroke="#000080"/></svg>
<svg style="left:1259px;top:366px" width="16" height="16" viewBox="0 0 16 16"><path d="M8 2Q3 3 3 7Q3 12 8 12Q13 12 13 8Q13 5 9 5Q6 5 6 8" fill="none" stroke="#000080" stroke-width="1.2"/><path d="M4 1L10 1" stroke="#000080"/></svg>
<div class="hl" style="left:1258px;top:387px;width:19px;background:#ACA899"></div><div class="hl" style="left:1258px;top:388px;width:19px;background:#fff"></div>
<svg style="left:1259px;top:393px" width="16" height="16" viewBox="0 0 16 16"><rect x="1" y="1" width="14" height="14" fill="#000080"/><circle cx="8" cy="8" r="5.5" fill="#fff"/></svg>
<svg style="left:1259px;top:415px" width="16" height="16" viewBox="0 0 16 16"><rect x="0" y="2" width="16" height="12" fill="#000080"/><circle cx="8" cy="8" r="5" fill="#fff"/></svg>
<div class="hl" style="left:1258px;top:437px;width:19px;background:#ACA899"></div><div class="hl" style="left:1258px;top:438px;width:19px;background:#fff"></div>
<svg style="left:1259px;top:444px" width="16" height="16" viewBox="0 0 16 16"><path d="M3.5 13.5H13.5V3.5H5.5V11.5H11.5V5.5H7.5V9.5H9.5" fill="none" stroke="#000080" stroke-width="1"/><path d="M1 13.5H3.5" stroke="#000080"/></svg>
<svg style="left:1259px;top:466px" width="16" height="16" viewBox="0 0 16 16"><path d="M8 8Q10 8 10 10Q10 13 7 13Q3 13 3 9Q3 4 8 4Q14 4 14 10" fill="none" stroke="#000080" stroke-width="1.3"/></svg>
<svg style="left:1259px;top:488px" width="16" height="16" viewBox="0 0 16 16"><circle cx="8" cy="8" r="6" fill="none" stroke="#000080" stroke-width="1.2"/><circle cx="8" cy="8" r="3.5" fill="none" stroke="#000080" stroke-width="1.2"/><circle cx="8" cy="8" r="1" fill="#000080"/></svg>
<div class="hl" style="left:1258px;top:510px;width:19px;background:#ACA899"></div><div class="hl" style="left:1258px;top:511px;width:19px;background:#fff"></div>
<svg style="left:1259px;top:516px" width="16" height="16" viewBox="0 0 16 16"><rect x="3" y="2" width="10" height="12" rx="2" fill="none" stroke="#000080" stroke-width="1.5"/><path d="M6 2V14M10 2V14" stroke="#000080" stroke-width="1.5"/><path d="M1 6V10M15 6V10" stroke="#000080" stroke-width="1.5"/></svg>
<svg style="left:1259px;top:539px" width="16" height="16" viewBox="0 0 16 16"><rect x="0" y="10" width="16" height="4" fill="#00FFFF"/><path d="M3 14V8Q3 4 8 4Q13 4 13 8V14Z" fill="#0000E0"/><path d="M0 4H16" stroke="#00C0C0" stroke-width="1.5"/><rect x="0" y="14" width="16" height="1" fill="#000"/></svg>
<svg style="left:1259px;top:561px" width="16" height="16" viewBox="0 0 16 16"><path d="M1 13H15V10H8L12 4H8L2 10Z" fill="#A7A494"/><path d="M8 4L12 4" stroke="#fff"/></svg>
<svg style="left:1259px;top:582px" width="16" height="16" viewBox="0 0 16 16"><rect x="0" y="4" width="16" height="8" fill="#FFFF00"/><ellipse cx="8" cy="8" rx="5" ry="6" fill="#0000E0"/><path d="M0 4H16M0 12H16" stroke="#000080"/></svg>
<div class="hl" style="left:1258px;top:602px;width:19px;background:#ACA899"></div><div class="hl" style="left:1258px;top:603px;width:19px;background:#fff"></div>
<div class="a" style="left:0;top:91px;width:159px;height:742px;border-left:1px solid #A8A595;border-top:1px solid #A8A595;border-right:1px solid transparent;border-bottom:1px solid #8E8B7C"></div>
<div class="vl" style="left:155px;top:92px;height:740px;background:#fff"></div>
<div class="hl" style="left:1px;top:831px;width:155px;background:#fff"></div>
<div class="t" style="left:2px;top:94px;font-size:11px">E-total, dBi(Gain)</div>
<div class="hl" style="left:0;top:111px;width:158px;background:#fff"></div>
<div class="a" style="left:0;top:113px;width:156px;height:658px;background:#fff;border-left:1px solid #A8A595;border-top:1px solid #A8A595;border-right:1px solid #ECE9D8"></div>
<div class="a" style="left:2px;top:114px;width:40px;height:20px;background:#FF0000"></div>
<div class="t" style="left:53px;top:119px;color:#0A1E8C;font-size:11px">8.94405</div>
<div class="a" style="left:2px;top:134px;width:40px;height:20px;background:#FF4400"></div>
<div class="t" style="left:53px;top:139px;color:#0A1E8C;font-size:11px">6.94405</div>
<div class="a" style="left:2px;top:154px;width:40px;height:20px;background:#FF8800"></div>
<div class="t" style="left:53px;top:159px;color:#0A1E8C;font-size:11px">4.94405</div>
<div class="a" style="left:2px;top:174px;width:40px;height:20px;background:#FFCC00"></div>
<div class="t" style="left:53px;top:179px;color:#0A1E8C;font-size:11px">2.94405</div>
<div class="a" style="left:2px;top:194px;width:40px;height:20px;background:#EEFF00"></div>
<div class="t" style="left:53px;top:199px;color:#0A1E8C;font-size:11px">0.94405</div>
<div class="a" style="left:2px;top:214px;width:40px;height:20px;background:#AAFF00"></div>
<div class="t" style="left:52px;top:219px;color:#0A1E8C;font-size:11px">-1.05595</div>
<div class="a" style="left:2px;top:234px;width:40px;height:20px;background:#66FF00"></div>
<div class="t" style="left:52px;top:239px;color:#0A1E8C;font-size:11px">-3.05595</div>
<div class="a" style="left:2px;top:254px;width:40px;height:20px;background:#22FF00"></div>
<div class="t" style="left:52px;top:259px;color:#0A1E8C;font-size:11px">-5.05595</div>
<div class="a" style="left:2px;top:274px;width:40px;height:20px;background:#00FF22"></div>
<div class="t" style="left:52px;top:279px;color:#0A1E8C;font-size:11px">-7.05595</div>
<div class="a" style="left:2px;top:294px;width:40px;height:20px;background:#00FF66"></div>
<div class="t" style="left:52px;top:299px;color:#0A1E8C;font-size:11px">-9.05595</div>
<div class="a" style="left:2px;top:314px;width:40px;height:20px;background:#00FFAA"></div>
<div class="t" style="left:52px;top:319px;color:#0A1E8C;font-size:11px">-11.0559</div>
<div class="a" style="left:2px;top:334px;width:40px;height:20px;background:#00FFEE"></div>
<div class="t" style="left:52px;top:339px;color:#0A1E8C;font-size:11px">-13.0559</div>
<div class="a" style="left:2px;top:354px;width:40px;height:20px;background:#00CCFF"></div>
<div class="t" style="left:52px;top:359px;color:#0A1E8C;font-size:11px">-15.0559</div>
<div class="a" style="left:2px;top:374px;width:40px;height:20px;background:#0088FF"></div>
<div class="t" style="left:52px;top:379px;color:#0A1E8C;font-size:11px">-17.0559</div>
<div class="a" style="left:2px;top:394px;width:40px;height:20px;background:#0044FF"></div>
<div class="t" style="left:52px;top:399px;color:#0A1E8C;font-size:11px">-19.0559</div>
<div class="a" style="left:2px;top:415px;width:50px;height:19px;border:1px solid #F0E890;background:#fff"></div>
<div class="a" style="left:3px;top:416px;width:39px;height:17px;background:#0000FF"></div>
<div class="a" style="left:52px;top:415px;width:102px;height:19px;background:#0000F0"></div>
<div class="t" style="left:52px;top:419px;color:#fff;font-size:11px">-21.0559</div>
<div class="hl" style="left:0;top:771px;width:156px;background:#fff"></div>
<div class="a" style="left:0;top:772px;width:156px;height:59px;border-left:1px solid #A8A595;border-top:1px solid #A8A595"></div>
<div class="t" style="left:2px;top:775px;font-size:11px">Pattern ID: None</div>
<div class="t" style="left:2px;top:788px;font-size:11px">Freq: 2.45 (GHz)</div>
<div class="t" style="left:2px;top:801px;font-size:11px">Magnitude: E-total</div>
<div class="t" style="left:2px;top:814px;font-size:11px">Color: dBi(Gain)</div>
<div class="a" style="left:159px;top:90px;width:1096px;height:743px;border-left:1px solid #4E7C86;border-top:1px solid #4E7C86;border-right:1px solid #fff;border-bottom:1px solid #fff;background:#66D5FA"></div>
<svg style="left:0;top:0" width="1279" height="964" viewBox="0 0 1279 964"><defs><clipPath id="vc"><rect x="160" y="91" width="1094" height="741"/></clipPath></defs><g clip-path="url(#vc)">
<path d="M225.2 266.8Q221 290 227.4 309.7Q232 320 239.8 327" stroke="#E6F53C" stroke-width="1.8" fill="none" stroke-linecap="round"/>
<ellipse cx="245.6" cy="277.7" rx="8.5" ry="21.5" transform="rotate(-12 245.6 277.7)" stroke="#E6F53C" stroke-width="1.8" fill="none" stroke-linecap="round"/>
<path d="M263 280Q266 283 265.9 290" stroke="#E6F53C" stroke-width="1.8" fill="none" stroke-linecap="round"/>
<ellipse cx="275.3" cy="244.3" rx="9" ry="22" transform="rotate(-12 275.3 244.3)" stroke="#E6F53C" stroke-width="1.8" fill="none" stroke-linecap="round"/>
<path d="M280.4 204.4Q293 214 297 228Q300 245 298.5 261" stroke="#E6F53C" stroke-width="1.8" fill="none" stroke-linecap="round"/>
<path d="M1040.6 102Q1045 118 1062 132Q1075 141 1091 143" stroke="#E6F53C" stroke-width="1.8" fill="none" stroke-linecap="round"/>
<ellipse cx="1068" cy="103" rx="11.5" ry="8.5" transform="rotate(32 1068 103)" stroke="#E6F53C" stroke-width="1.8" fill="none" stroke-linecap="round"/>
<path d="M1079 101Q1090 109 1094 116Q1095 123 1084.5 123.5" stroke="#E6F53C" stroke-width="1.8" fill="none" stroke-linecap="round"/>
<path d="M1083 92Q1092 101 1104 104Q1114 103 1114 97Q1114 93 1111 91" stroke="#E6F53C" stroke-width="1.8" fill="none" stroke-linecap="round"/>
<path d="M1130 91L1131 94" stroke="#E6F53C" stroke-width="1.8" fill="none" stroke-linecap="round"/>
<path d="M543.7 143.7Q553 147 559 153.3" stroke="#E6F53C" stroke-width="1.8" fill="none" stroke-linecap="round"/>
<polygon points="766,183 1015,474.5 647,821.5 494,465" fill="#1F1F1F" stroke="#2A7A92" stroke-width="1.6" stroke-linejoin="round"/>
<path d="M772.6 190.7L498.1 474.6M756.2 193.2L1001.5 487.2M779.3 198.5L502.3 484.3M746.4 203.4L988.0 499.9M786.1 206.5L506.5 494.2M736.6 213.5L974.7 512.5M793.0 214.6L510.8 504.2M726.8 223.6L961.3 525.1M800.0 222.9L515.2 514.4M717.1 233.7L948.1 537.6M807.2 231.2L519.6 524.8M707.5 243.7L934.9 550.1M814.5 239.8L524.2 535.3M697.8 253.7L921.7 562.5M821.9 248.5L528.8 546.0M688.2 263.6L908.6 574.8M829.5 257.3L533.4 556.9M678.7 273.5L895.6 587.1M837.2 266.3L538.2 568.0M669.1 283.4L882.7 599.3M845.0 275.5L543.0 579.3M659.6 293.3L869.8 611.5M853.0 284.8L548.0 590.7M650.2 303.1L856.9 623.6M861.1 294.3L553.0 602.4M640.7 312.9L844.1 635.6M869.4 304.0L558.1 614.3M631.3 322.6L831.4 647.6M877.8 313.9L563.3 626.4M621.9 332.4L818.7 659.6M886.4 323.9L568.5 638.7M612.6 342.0L806.1 671.5M895.1 334.2L573.9 651.2M603.3 351.7L793.5 683.3M904.0 344.6L579.4 664.0M594.0 361.3L781.0 695.1M913.1 355.3L585.0 677.0M584.8 370.9L768.6 706.9M922.4 366.1L590.7 690.2M575.5 380.5L756.2 718.6M931.9 377.2L596.4 703.7M566.4 390.0L743.8 730.2M941.5 388.5L602.3 717.4M557.2 399.5L731.5 741.8M951.4 400.0L608.4 731.5M548.1 408.9L719.3 753.3M961.4 411.8L614.5 745.7M539.0 418.3L707.1 764.8M971.7 423.8L620.7 760.3M529.9 427.7L695.0 776.3M982.2 436.1L627.1 775.1M520.9 437.1L682.9 787.6M992.9 448.6L633.6 790.3M511.9 446.4L670.9 799.0M1003.8 461.4L640.2 805.7M502.9 455.7L658.9 810.3" stroke="#3486A4" stroke-width="1" fill="none"/>
<rect x="765.8" y="261.0" width="1.4" height="1.4" fill="#C84830"/><rect x="777.1" y="251.4" width="1.4" height="1.4" fill="#C84830"/><rect x="793.2" y="344.6" width="1.4" height="1.4" fill="#C84830"/><rect x="812.4" y="343.0" width="1.4" height="1.4" fill="#C84830"/><rect x="820.4" y="352.7" width="1.4" height="1.4" fill="#C84830"/><rect x="798.0" y="373.6" width="1.4" height="1.4" fill="#C84830"/><rect x="823.7" y="383.2" width="1.4" height="1.4" fill="#C84830"/><rect x="832.7" y="449.1" width="1.4" height="1.4" fill="#C84830"/><rect x="829.4" y="471.6" width="1.4" height="1.4" fill="#C84830"/><rect x="849.4" y="471.6" width="1.4" height="1.4" fill="#C84830"/><rect x="942.6" y="484.7" width="1.4" height="1.4" fill="#C84830"/><rect x="908.7" y="495.9" width="1.4" height="1.4" fill="#C84830"/><rect x="853.7" y="506.7" width="1.4" height="1.4" fill="#C84830"/><rect x="871.9" y="530.6" width="1.4" height="1.4" fill="#C84830"/><rect x="949.7" y="521.6" width="1.4" height="1.4" fill="#C84830"/><rect x="847.1" y="554.3" width="1.4" height="1.4" fill="#C84830"/><rect x="924.5" y="545.9" width="1.4" height="1.4" fill="#C84830"/><rect x="899.4" y="569.2" width="1.4" height="1.4" fill="#C84830"/><rect x="844.0" y="578.5" width="1.4" height="1.4" fill="#C84830"/><rect x="593.6" y="646.6" width="1.4" height="1.4" fill="#C84830"/><rect x="676.4" y="658.2" width="1.4" height="1.4" fill="#C84830"/><rect x="683.5" y="670.8" width="1.4" height="1.4" fill="#C84830"/><rect x="709.4" y="625.9" width="1.4" height="1.4" fill="#C84830"/><rect x="712.7" y="662.5" width="1.4" height="1.4" fill="#C84830"/><rect x="708.6" y="686.5" width="1.4" height="1.4" fill="#C84830"/><rect x="738.4" y="678.2" width="1.4" height="1.4" fill="#C84830"/><rect x="734.5" y="703.9" width="1.4" height="1.4" fill="#C84830"/><rect x="729.7" y="729.4" width="1.4" height="1.4" fill="#C84830"/><rect x="578.8" y="643.6" width="1.4" height="1.4" fill="#C84830"/>
<clipPath id="sc"><path d="M500.0 147.0L503.3 147.1L506.7 147.2L510.1 147.3L513.6 147.5L517.2 147.7L520.8 147.9L524.4 148.2L528.1 148.5L531.8 148.9L535.5 149.4L539.1 149.9L542.8 150.5L546.4 151.2L550.0 152.0L553.6 152.9L557.2 153.8L560.7 154.9L564.3 156.0L567.9 157.1L571.5 158.4L575.1 159.7L578.6 161.0L582.2 162.4L585.8 163.9L589.4 165.4L592.9 166.9L596.5 168.4L600.0 170.0L603.6 171.6L607.2 173.3L610.8 175.0L614.4 176.8L618.1 178.7L621.7 180.5L625.3 182.4L628.9 184.4L632.4 186.3L635.9 188.3L639.3 190.2L642.6 192.2L645.9 194.1L649.0 196.0L652.0 197.9L655.0 199.8L657.8 201.6L660.7 203.5L663.4 205.3L666.1 207.2L668.7 209.1L671.3 211.0L673.8 212.9L676.3 214.8L678.8 216.8L681.2 218.8L683.6 220.9L686.0 223.0L688.4 225.2L690.7 227.4L693.0 229.6L695.2 231.9L697.4 234.2L699.6 236.5L701.7 238.9L703.8 241.3L705.9 243.7L707.9 246.1L710.0 248.6L712.0 251.0L714.0 253.5L716.0 256.0L718.0 258.5L719.9 261.1L721.9 263.7L723.8 266.3L725.7 269.0L727.5 271.6L729.4 274.3L731.2 277.0L733.0 279.7L734.8 282.4L736.6 285.1L738.4 287.7L740.2 290.4L742.0 293.0L743.8 295.6L745.6 298.2L747.4 300.7L749.1 303.2L750.9 305.8L752.7 308.3L754.4 310.8L756.2 313.3L757.9 315.9L759.6 318.5L761.2 321.0L762.9 323.7L764.4 326.3L766.0 329.0L767.5 331.7L769.0 334.5L770.5 337.3L771.9 340.0L773.4 342.9L774.8 345.7L776.1 348.6L777.5 351.4L778.8 354.3L780.1 357.2L781.3 360.2L782.6 363.1L783.8 366.0L785.0 369.0L786.2 372.0L787.3 375.1L788.5 378.3L789.7 381.5L790.8 384.8L791.9 388.0L792.9 391.2L794.0 394.5L794.9 397.6L795.9 400.7L796.8 403.7L797.6 406.6L798.3 409.4L799.0 412.0L799.6 414.4L800.2 416.6L800.7 418.6L801.2 420.5L801.7 422.2L802.0 423.9L802.4 425.6L802.7 427.3L802.9 429.1L803.0 430.9L803.1 432.9L803.1 435.0L803.1 437.4L803.0 440.0L802.9 442.8L802.7 445.7L802.6 448.8L802.4 452.0L802.1 455.3L801.8 458.6L801.4 462.1L800.9 465.7L800.3 469.4L799.6 473.1L798.7 477.0L797.7 480.9L796.4 484.9L795.0 489.0L793.4 493.2L791.6 497.7L789.6 502.4L787.5 507.3L785.2 512.2L782.8 517.3L780.2 522.3L777.6 527.4L774.9 532.4L772.0 537.3L769.1 542.0L766.1 546.6L763.1 550.9L760.0 555.0L756.8 558.9L753.6 562.6L750.2 566.2L746.8 569.7L743.3 573.1L739.6 576.3L735.9 579.5L732.2 582.6L728.3 585.5L724.4 588.4L720.4 591.2L716.3 593.9L712.2 596.5L708.0 599.0L703.8 601.5L699.5 603.8L695.1 606.1L690.7 608.3L686.2 610.4L681.6 612.4L676.9 614.3L672.2 616.1L667.4 617.9L662.5 619.5L657.5 621.0L652.4 622.4L647.3 623.8L642.0 625.0L636.5 626.1L630.7 627.1L624.6 628.0L618.4 628.8L612.0 629.5L605.6 630.1L599.1 630.6L592.7 631.0L586.5 631.3L580.4 631.6L574.5 631.8L569.0 631.9L563.8 632.0L559.0 632.0L554.7 632.0L550.9 631.9L547.5 631.8L544.3 631.6L541.5 631.3L538.8 631.0L536.2 630.6L533.6 630.1L531.0 629.5L528.3 628.8L525.4 628.0L522.3 627.1L518.9 626.1L515.0 625.0L510.8 623.8L506.3 622.4L501.6 620.9L496.6 619.3L491.5 617.6L486.3 615.9L481.1 614.0L475.7 612.0L470.4 610.0L465.1 607.9L459.9 605.8L454.8 603.6L449.8 601.3L445.0 599.0L440.3 596.6L435.7 594.2L431.1 591.8L426.5 589.2L422.0 586.6L417.5 583.9L413.1 581.2L408.8 578.4L404.5 575.5L400.2 572.5L396.0 569.5L392.0 566.4L387.9 563.2L384.0 560.0L380.1 556.6L376.3 553.2L372.6 549.6L368.9 545.9L365.3 542.1L361.7 538.3L358.2 534.4L354.8 530.4L351.5 526.5L348.2 522.6L345.1 518.6L342.0 514.7L338.9 510.8L336.0 507.0L333.2 503.3L330.4 499.6L327.7 496.0L325.1 492.5L322.6 488.9L320.1 485.4L317.8 481.8L315.4 478.2L313.2 474.5L311.0 470.7L308.9 466.7L306.9 462.7L304.9 458.4L303.0 454.0L301.1 449.3L299.3 444.2L297.5 438.8L295.8 433.3L294.2 427.5L292.6 421.7L291.1 415.9L289.6 410.1L288.3 404.4L287.0 398.9L285.9 393.7L284.8 388.7L283.8 384.1L283.0 380.0L282.3 376.3L281.7 373.1L281.2 370.2L280.8 367.5L280.5 365.2L280.4 363.0L280.2 360.9L280.2 358.9L280.2 356.9L280.3 354.8L280.4 352.7L280.6 350.3L280.8 347.8L281.0 345.0L281.2 342.0L281.5 338.8L281.9 335.4L282.3 332.0L282.8 328.5L283.3 324.9L283.9 321.3L284.5 317.7L285.1 314.1L285.8 310.5L286.6 307.0L287.3 303.6L288.2 300.2L289.0 297.0L289.9 293.9L290.8 290.9L291.7 287.9L292.7 285.0L293.7 282.2L294.7 279.3L295.8 276.6L297.0 273.8L298.1 271.0L299.4 268.3L300.7 265.5L302.1 262.7L303.5 259.9L305.0 257.0L306.6 254.1L308.2 251.1L310.0 248.1L311.8 245.0L313.6 241.9L315.5 238.9L317.5 235.8L319.5 232.8L321.5 229.8L323.6 226.9L325.7 224.0L327.8 221.2L329.9 218.6L332.0 216.0L334.1 213.5L336.2 211.2L338.4 208.9L340.5 206.6L342.7 204.5L344.9 202.4L347.1 200.3L349.4 198.3L351.7 196.3L354.1 194.4L356.5 192.5L358.9 190.7L361.4 188.8L364.0 187.0L366.6 185.2L369.3 183.4L372.0 181.7L374.7 180.0L377.4 178.3L380.3 176.7L383.1 175.1L386.0 173.6L389.0 172.1L392.1 170.6L395.2 169.1L398.4 167.7L401.6 166.3L405.0 165.0L408.5 163.7L412.1 162.4L415.9 161.1L419.9 159.9L423.9 158.6L427.9 157.5L432.0 156.3L436.1 155.2L440.1 154.2L444.1 153.2L448.1 152.3L451.9 151.5L455.5 150.7L459.0 150.0L462.3 149.4L465.5 148.9L468.5 148.4L471.4 148.0L474.2 147.7L477.0 147.5L479.8 147.2L482.5 147.1L485.2 147.0L488.0 146.9L490.9 146.9L493.8 146.9L496.8 146.9Z"/></clipPath>
<g clip-path="url(#sc)"><path d="M800.5 445.7L800.8 447.9L801.0 450.2L801.1 452.6L801.2 455.0L801.2 457.5L799.3 465.9L796.6 474.0L793.0 481.9L788.5 489.5L783.4 496.8L783.5 495.7L783.6 494.7L783.7 493.7L783.7 492.7L783.6 491.7L788.8 483.1L793.1 474.1L796.4 464.8L798.8 455.3Z" fill="#292900" stroke="#292900" stroke-width="0.9"/>
<path d="M721.8 589.3L719.6 590.5L717.4 591.6L715.3 592.7L713.3 593.6L711.2 594.4L718.7 588.3L725.9 581.7L732.5 574.5L738.7 566.8L744.3 558.5L745.2 558.1L746.1 557.7L747.0 557.2L747.9 556.7L748.9 556.1L744.5 563.7L739.6 570.9L734.1 577.5L728.2 583.7Z" fill="#292900" stroke="#292900" stroke-width="0.9"/>
<path d="M654.5 621.0L651.9 621.3L649.4 621.4L646.9 621.4L644.6 621.2L642.3 620.9L653.0 617.3L663.5 613.2L673.7 608.5L683.7 603.1L693.4 597.2L694.9 597.4L696.5 597.5L698.2 597.5L699.9 597.3L701.7 597.1L692.9 603.0L683.7 608.4L674.3 613.2L664.5 617.4Z" fill="#292700" stroke="#292700" stroke-width="0.9"/>
<path d="M782.4 372.8L784.0 374.6L785.4 376.5L786.8 378.6L788.2 380.8L789.4 383.1L792.3 393.4L794.8 403.9L796.9 414.5L798.6 425.3L798.3 436.0L797.7 434.4L796.9 432.8L796.1 431.3L795.2 429.9L794.2 428.6L792.8 417.1L790.8 405.7L788.3 394.5L785.5 383.6Z" fill="#292700" stroke="#292700" stroke-width="0.9"/>
<path d="M750.2 314.1L752.5 315.4L754.8 316.8L756.9 318.4L758.9 320.2L760.8 322.1L766.0 331.8L770.7 341.7L775.0 351.8L778.9 362.2L782.4 372.8L780.8 371.1L779.2 369.6L777.4 368.3L775.6 367.1L773.7 366.0L769.8 355.1L765.6 344.5L761.0 334.1L755.9 323.9Z" fill="#292100" stroke="#292100" stroke-width="0.9"/>
<path d="M586.8 630.3L584.1 629.8L581.5 629.2L579.0 628.3L576.7 627.3L574.4 626.1L586.0 624.9L597.5 623.4L609.1 621.7L620.6 619.6L632.1 617.0L633.9 618.0L635.9 619.0L637.9 619.8L640.1 620.4L642.3 620.9L631.4 623.8L620.3 626.1L609.2 627.8L598.0 629.3Z" fill="#292100" stroke="#292100" stroke-width="0.9"/>
<path d="M801.2 457.5L801.1 460.1L801.0 462.7L800.7 465.4L800.4 468.2L799.9 470.9L797.9 477.8L795.0 484.4L791.4 490.7L787.1 496.8L782.4 502.6L782.7 501.4L782.9 500.2L783.1 499.1L783.3 497.9L783.4 496.8L788.5 489.5L793.0 481.9L796.6 474.0L799.3 465.9Z" fill="#292900" stroke="#292900" stroke-width="0.9"/>
<path d="M732.9 581.8L730.6 583.5L728.4 585.1L726.2 586.6L723.9 588.0L721.8 589.3L728.2 583.7L734.1 577.5L739.6 570.9L744.5 563.7L748.9 556.1L749.8 555.4L750.7 554.7L751.7 554.0L752.7 553.3L753.6 552.5L750.6 559.3L747.0 565.6L742.8 571.5L738.1 576.9Z" fill="#292900" stroke="#292900" stroke-width="0.9"/>
<path d="M799.9 470.9L799.4 473.8L798.7 476.7L798.0 479.6L797.2 482.5L796.2 485.5L794.2 490.7L791.7 495.6L788.5 500.3L784.8 504.8L780.6 509.0L781.0 507.7L781.4 506.4L781.8 505.1L782.1 503.9L782.4 502.6L787.1 496.8L791.4 490.7L795.0 484.4L797.9 477.8Z" fill="#292900" stroke="#292900" stroke-width="0.9"/>
<path d="M744.3 572.0L742.0 574.2L739.7 576.2L737.5 578.2L735.2 580.0L732.9 581.8L738.1 576.9L742.8 571.5L747.0 565.6L750.6 559.3L753.6 552.5L754.6 551.7L755.6 550.8L756.5 549.8L757.5 548.9L758.4 547.9L756.7 553.6L754.4 558.8L751.6 563.7L748.2 568.1Z" fill="#292900" stroke="#292900" stroke-width="0.9"/>
<path d="M670.9 217.6L674.0 218.2L677.1 219.1L680.0 220.1L682.8 221.5L685.4 223.0L693.5 231.1L701.0 239.6L708.1 248.5L714.8 257.5L721.2 266.7L718.8 265.3L716.4 264.1L713.8 263.1L711.0 262.3L708.2 261.8L701.6 252.4L694.7 243.1L687.3 234.1L679.3 225.6Z" fill="#291500" stroke="#291500" stroke-width="0.9"/>
<path d="M460.7 605.6L458.1 603.9L455.6 602.0L453.3 599.8L451.1 597.4L449.1 594.7L460.1 598.8L471.2 602.5L482.5 605.9L493.9 608.9L505.5 611.7L507.3 614.3L509.4 616.8L511.5 619.0L513.8 621.0L516.3 622.9L504.9 620.0L493.7 616.9L482.5 613.4L471.6 609.7Z" fill="#291500" stroke="#291500" stroke-width="0.9"/>
<path d="M789.4 383.1L790.6 385.6L791.7 388.3L792.8 391.0L793.8 393.9L794.7 396.9L797.5 406.6L799.9 416.4L801.8 426.3L801.8 436.1L800.5 445.7L800.2 443.6L799.8 441.6L799.4 439.7L798.9 437.8L798.3 436.0L798.6 425.3L796.9 414.5L794.8 403.9L792.3 393.4Z" fill="#292700" stroke="#292700" stroke-width="0.9"/>
<path d="M668.6 617.4L665.7 618.4L662.8 619.3L660.0 620.0L657.2 620.6L654.5 621.0L664.5 617.4L674.3 613.2L683.7 608.4L692.9 603.0L701.7 597.1L703.5 596.8L705.4 596.4L707.3 595.8L709.2 595.2L711.2 594.4L703.4 600.1L695.2 605.3L686.6 609.9L677.8 613.9Z" fill="#292700" stroke="#292700" stroke-width="0.9"/>
<path d="M796.2 485.5L795.1 488.4L794.0 491.4L792.7 494.4L791.5 497.5L790.1 500.5L788.9 504.1L787.0 507.4L784.6 510.4L781.7 513.2L778.1 515.7L778.7 514.4L779.2 513.0L779.7 511.7L780.2 510.3L780.6 509.0L784.8 504.8L788.5 500.3L791.7 495.6L794.2 490.7Z" fill="#292900" stroke="#292900" stroke-width="0.9"/>
<path d="M755.4 560.2L753.2 562.7L751.0 565.1L748.8 567.5L746.5 569.8L744.3 572.0L748.2 568.1L751.6 563.7L754.4 558.8L756.7 553.6L758.4 547.9L759.4 546.8L760.3 545.8L761.3 544.7L762.2 543.6L763.1 542.4L762.7 546.7L761.6 550.7L760.1 554.3L758.0 557.4Z" fill="#292900" stroke="#292900" stroke-width="0.9"/>
<path d="M790.1 500.5L788.8 503.6L787.3 506.7L785.9 509.7L784.4 512.9L782.8 515.9L782.4 517.9L781.4 519.5L779.9 520.9L777.8 521.9L775.1 522.7L775.7 521.3L776.4 519.9L777.0 518.5L777.6 517.1L778.1 515.7L781.7 513.2L784.6 510.4L787.0 507.4L788.9 504.1Z" fill="#292900" stroke="#292900" stroke-width="0.9"/>
<path d="M765.6 546.5L763.6 549.3L761.6 552.1L759.6 554.9L757.5 557.5L755.4 560.2L758.0 557.4L760.1 554.3L761.6 550.7L762.7 546.7L763.1 542.4L764.0 541.2L764.8 540.0L765.7 538.8L766.6 537.5L767.5 536.2L768.2 539.0L768.3 541.4L767.9 543.4L767.0 545.1Z" fill="#292900" stroke="#292900" stroke-width="0.9"/>
<path d="M721.2 266.7L723.4 268.3L725.5 270.1L727.5 272.1L729.3 274.4L731.0 276.8L737.0 285.7L743.0 294.7L749.1 303.7L755.1 312.8L760.8 322.1L758.9 320.2L756.9 318.4L754.8 316.8L752.5 315.4L750.2 314.1L744.4 304.5L738.5 295.1L732.9 285.6L727.1 276.1Z" fill="#291a00" stroke="#291a00" stroke-width="0.9"/>
<path d="M530.4 629.3L527.3 628.4L524.3 627.3L521.5 626.1L518.8 624.6L516.3 622.9L527.8 625.6L539.4 627.4L551.1 627.6L562.8 627.0L574.4 626.1L576.7 627.3L579.0 628.3L581.5 629.2L584.1 629.8L586.8 630.3L575.6 631.1L564.4 631.6L553.1 631.8L541.7 631.3Z" fill="#291a00" stroke="#291a00" stroke-width="0.9"/>
<path d="M782.8 515.9L781.3 519.1L779.7 522.2L778.0 525.3L776.4 528.4L774.7 531.4L775.2 531.7L775.1 531.7L774.4 531.3L773.2 530.6L771.5 529.6L772.2 528.2L773.0 526.8L773.7 525.4L774.4 524.0L775.1 522.7L777.8 521.9L779.9 520.9L781.4 519.5L782.4 517.9Z" fill="#292900" stroke="#292900" stroke-width="0.9"/>
<path d="M774.7 531.4L772.9 534.5L771.1 537.5L769.3 540.5L767.5 543.5L765.6 546.5L767.0 545.1L767.9 543.4L768.3 541.4L768.2 539.0L767.5 536.2L768.3 534.9L769.1 533.6L769.9 532.3L770.7 530.9L771.5 529.6L773.2 530.6L774.4 531.3L775.1 531.7L775.2 531.7Z" fill="#292900" stroke="#292900" stroke-width="0.9"/>
<path d="M601.8 630.2L598.7 630.6L595.5 630.8L592.5 630.8L589.6 630.7L586.8 630.3L598.0 629.3L609.2 627.8L620.3 626.1L631.4 623.8L642.3 620.9L644.6 621.2L646.9 621.4L649.4 621.4L651.9 621.3L654.5 621.0L644.3 624.0L633.9 626.4L623.3 628.1L612.6 629.4Z" fill="#292100" stroke="#292100" stroke-width="0.9"/>
<path d="M760.8 322.1L762.7 324.2L764.4 326.5L766.0 329.0L767.5 331.7L768.9 334.5L773.8 343.8L778.3 353.4L782.5 363.1L786.2 373.0L789.4 383.1L788.2 380.8L786.8 378.6L785.4 376.5L784.0 374.6L782.4 372.8L778.9 362.2L775.0 351.8L770.7 341.7L766.0 331.8Z" fill="#292100" stroke="#292100" stroke-width="0.9"/>
<path d="M553.0 157.4L556.8 157.1L560.5 157.1L564.0 157.3L567.5 157.7L570.8 158.4L581.8 162.8L592.5 167.6L603.1 172.7L613.5 178.2L623.6 184.0L620.2 183.5L616.8 183.2L613.2 183.2L609.5 183.3L605.7 183.8L595.6 177.7L585.2 172.0L574.7 166.6L564.0 161.7Z" fill="#661a00" stroke="#661a00" stroke-width="0.9"/>
<path d="M354.9 530.1L353.1 527.4L351.5 524.4L350.0 521.3L348.6 517.9L347.4 514.4L355.1 522.3L363.1 530.1L371.5 537.5L380.3 544.7L389.6 551.4L390.8 555.2L392.3 558.7L393.8 562.0L395.6 565.1L397.5 567.9L388.1 561.2L379.1 554.1L370.6 546.5L362.6 538.4Z" fill="#290b00" stroke="#290b00" stroke-width="0.9"/>
<path d="M794.7 396.9L795.6 400.1L796.4 403.4L797.1 406.8L797.7 410.4L798.4 414.0L801.3 422.9L803.0 431.7L803.0 440.4L802.3 449.0L801.2 457.5L801.2 455.0L801.1 452.6L801.0 450.2L800.8 447.9L800.5 445.7L801.8 436.1L801.8 426.3L799.9 416.4L797.5 406.6Z" fill="#292700" stroke="#292700" stroke-width="0.9"/>
<path d="M684.1 610.0L680.9 611.8L677.8 613.4L674.6 614.9L671.6 616.2L668.6 617.4L677.8 613.9L686.6 609.9L695.2 605.3L703.4 600.1L711.2 594.4L713.3 593.6L715.3 592.7L717.4 591.6L719.6 590.5L721.8 589.3L715.0 594.5L707.8 599.1L700.2 603.3L692.3 606.9Z" fill="#292700" stroke="#292700" stroke-width="0.9"/>
<path d="M623.6 184.0L626.8 184.7L629.9 185.6L632.9 186.8L635.8 188.2L638.5 189.8L648.4 195.7L658.2 201.9L667.7 208.4L676.7 215.5L685.4 223.0L682.8 221.5L680.0 220.1L677.1 219.1L674.0 218.2L670.9 217.6L662.0 210.2L652.7 203.1L643.2 196.4L633.5 190.1Z" fill="#4d1d00" stroke="#4d1d00" stroke-width="0.9"/>
<path d="M409.4 578.7L406.8 577.0L404.2 575.1L401.9 572.9L399.6 570.6L397.5 567.9L407.3 574.1L417.4 579.9L427.8 585.2L438.3 590.2L449.1 594.7L451.1 597.4L453.3 599.8L455.6 602.0L458.1 603.9L460.7 605.6L450.0 601.1L439.6 596.1L429.3 590.7L419.2 584.9Z" fill="#291000" stroke="#291000" stroke-width="0.9"/>
<path d="M343.0 206.2L345.6 203.5L348.1 200.8L350.7 198.2L353.3 195.8L356.0 193.5L362.3 189.8L369.0 186.5L376.1 183.8L383.6 181.6L391.5 180.0L387.9 183.0L384.2 186.3L380.5 189.7L376.8 193.2L373.2 196.9L366.2 197.8L359.7 199.2L353.7 201.1L348.1 203.4Z" fill="#a00800" stroke="#a00800" stroke-width="0.9"/>
<path d="M282.9 330.9L283.5 327.6L284.2 324.2L285.0 320.7L285.8 317.2L286.7 313.6L287.1 319.4L288.0 325.4L289.5 331.5L291.6 337.7L294.2 344.0L292.8 348.9L291.4 353.7L290.2 358.4L289.3 363.1L288.7 367.7L286.0 360.1L284.3 352.7L283.3 345.4L282.8 338.1Z" fill="#7a0600" stroke="#7a0600" stroke-width="0.9"/>
<path d="M685.4 223.0L687.8 224.8L690.2 226.9L692.3 229.2L694.3 231.7L696.1 234.4L703.9 242.5L711.2 250.8L718.2 259.2L724.8 267.9L731.0 276.8L729.3 274.4L727.5 272.1L725.5 270.1L723.4 268.3L721.2 266.7L714.8 257.5L708.1 248.5L701.0 239.6L693.5 231.1Z" fill="#311900" stroke="#311900" stroke-width="0.9"/>
<path d="M475.7 610.8L472.5 610.3L469.3 609.4L466.3 608.4L463.4 607.1L460.7 605.6L471.6 609.7L482.5 613.4L493.7 616.9L504.9 620.0L516.3 622.9L518.8 624.6L521.5 626.1L524.3 627.3L527.3 628.4L530.4 629.3L519.2 626.1L508.1 622.7L497.2 619.0L486.4 615.1Z" fill="#291500" stroke="#291500" stroke-width="0.9"/>
<path d="M798.4 414.0L798.9 417.8L799.5 421.8L799.8 425.8L799.8 429.9L799.4 434.1L800.7 441.6L801.4 449.2L801.6 456.6L801.2 463.8L799.9 470.9L800.4 468.2L800.7 465.4L801.0 462.7L801.1 460.1L801.2 457.5L802.3 449.0L803.0 440.4L803.0 431.7L801.3 422.9Z" fill="#292700" stroke="#292700" stroke-width="0.9"/>
<path d="M700.5 599.0L697.1 601.5L693.8 603.8L690.5 606.0L687.3 608.1L684.1 610.0L692.3 606.9L700.2 603.3L707.8 599.1L715.0 594.5L721.8 589.3L723.9 588.0L726.2 586.6L728.4 585.1L730.6 583.5L732.9 581.8L727.3 586.2L721.2 590.2L714.7 593.6L707.8 596.5Z" fill="#292700" stroke="#292700" stroke-width="0.9"/>
<path d="M768.9 334.5L770.1 337.5L771.3 340.6L772.4 344.0L773.4 347.4L774.2 351.1L779.2 359.9L783.7 368.9L787.8 378.1L791.5 387.5L794.7 396.9L793.8 393.9L792.8 391.0L791.7 388.3L790.6 385.6L789.4 383.1L786.2 373.0L782.5 363.1L778.3 353.4L773.8 343.8Z" fill="#292100" stroke="#292100" stroke-width="0.9"/>
<path d="M619.2 625.8L615.6 627.0L612.0 628.0L608.5 628.9L605.1 629.6L601.8 630.2L612.6 629.4L623.3 628.1L633.9 626.4L644.3 624.0L654.5 621.0L657.2 620.6L660.0 620.0L662.8 619.3L665.7 618.4L668.6 617.4L659.2 620.3L649.5 622.6L639.6 624.3L629.5 625.3Z" fill="#292100" stroke="#292100" stroke-width="0.9"/>
<path d="M547.5 629.1L543.9 629.7L540.3 630.1L536.9 630.2L533.6 629.9L530.4 629.3L541.7 631.3L553.1 631.8L564.4 631.6L575.6 631.1L586.8 630.3L589.6 630.7L592.5 630.8L595.5 630.8L598.7 630.6L601.8 630.2L591.1 630.6L580.2 630.7L569.4 630.6L558.5 630.0Z" fill="#291a00" stroke="#291a00" stroke-width="0.9"/>
<path d="M731.0 276.8L732.6 279.4L734.1 282.1L735.5 285.1L736.7 288.2L737.9 291.5L744.5 299.8L751.0 308.1L757.4 316.6L763.4 325.4L768.9 334.5L767.5 331.7L766.0 329.0L764.4 326.5L762.7 324.2L760.8 322.1L755.1 312.8L749.1 303.7L743.0 294.7L737.0 285.7Z" fill="#291a00" stroke="#291a00" stroke-width="0.9"/>
<path d="M356.0 193.5L358.6 191.3L361.2 189.2L363.8 187.2L366.4 185.4L368.9 183.7L376.3 179.2L384.1 175.3L392.3 172.0L400.8 169.2L409.8 167.1L406.2 169.3L402.5 171.7L398.9 174.3L395.2 177.0L391.5 180.0L383.6 181.6L376.1 183.8L369.0 186.5L362.3 189.8Z" fill="#a90900" stroke="#a90900" stroke-width="0.9"/>
<path d="M280.9 346.7L281.1 343.7L281.4 340.6L281.9 337.5L282.3 334.2L282.9 330.9L282.8 338.1L283.3 345.4L284.3 352.7L286.0 360.1L288.7 367.7L288.5 372.2L288.4 376.7L288.3 381.0L288.4 385.2L288.4 389.3L285.4 380.7L282.8 372.1L281.0 363.6L280.5 355.1Z" fill="#7a0600" stroke="#7a0600" stroke-width="0.9"/>
<path d="M497.0 147.8L500.5 147.4L503.9 147.2L507.2 147.2L510.4 147.4L513.5 147.8L525.0 148.4L536.6 149.6L548.2 151.6L559.6 154.6L570.8 158.4L567.5 157.7L564.0 157.3L560.5 157.1L556.8 157.1L553.0 157.4L541.9 154.1L530.7 151.6L519.5 149.9L508.2 148.7Z" fill="#891700" stroke="#891700" stroke-width="0.9"/>
<path d="M320.7 485.7L318.8 483.3L317.1 480.7L315.5 478.0L314.0 475.0L312.8 471.9L318.8 480.9L325.5 489.6L332.6 498.1L339.9 506.3L347.4 514.4L348.6 517.9L350.0 521.3L351.5 524.4L353.1 527.4L354.9 530.1L347.6 521.6L340.5 512.9L333.7 504.0L327.0 494.9Z" fill="#300800" stroke="#300800" stroke-width="0.9"/>
<path d="M427.0 158.4L430.3 157.2L433.5 156.1L436.6 155.1L439.6 154.3L442.6 153.7L453.1 151.2L463.8 149.2L474.7 147.9L485.8 147.5L497.0 147.8L493.4 148.4L489.7 149.2L486.0 150.2L482.1 151.5L478.2 153.0L467.6 152.9L457.2 153.6L447.0 154.7L436.9 156.4Z" fill="#9e0f00" stroke="#9e0f00" stroke-width="0.9"/>
<path d="M293.1 423.1L292.3 420.3L291.5 417.4L290.8 414.4L290.3 411.2L289.8 407.8L292.7 417.1L296.0 426.3L299.6 435.5L303.8 444.6L308.7 453.5L309.2 457.5L309.8 461.4L310.6 465.1L311.6 468.6L312.8 471.9L307.4 462.6L302.8 453.0L299.0 443.1L295.8 433.2Z" fill="#540800" stroke="#540800" stroke-width="0.9"/>
<path d="M799.4 434.1L798.7 438.3L797.9 442.6L797.0 446.9L796.1 451.4L795.1 455.9L796.8 462.2L797.7 468.4L798.0 474.3L797.4 480.0L796.2 485.5L797.2 482.5L798.0 479.6L798.7 476.7L799.4 473.8L799.9 470.9L801.2 463.8L801.6 456.6L801.4 449.2L800.7 441.6Z" fill="#292700" stroke="#292700" stroke-width="0.9"/>
<path d="M717.5 584.8L714.0 587.9L710.6 590.8L707.2 593.7L703.8 596.4L700.5 599.0L707.8 596.5L714.7 593.6L721.2 590.2L727.3 586.2L732.9 581.8L735.2 580.0L737.5 578.2L739.7 576.2L742.0 574.2L744.3 572.0L739.9 575.5L735.0 578.6L729.6 581.1L723.7 583.2Z" fill="#292700" stroke="#292700" stroke-width="0.9"/>
<path d="M570.8 158.4L574.0 159.3L577.0 160.5L579.9 161.8L582.7 163.4L585.4 165.2L596.4 169.5L607.2 174.1L617.9 179.0L628.3 184.3L638.5 189.8L635.8 188.2L632.9 186.8L629.9 185.6L626.8 184.7L623.6 184.0L613.5 178.2L603.1 172.7L592.5 167.6L581.8 162.8Z" fill="#721d00" stroke="#721d00" stroke-width="0.9"/>
<path d="M365.9 540.7L363.4 539.1L361.1 537.1L358.9 535.0L356.8 532.7L354.9 530.1L362.6 538.4L370.6 546.5L379.1 554.1L388.1 561.2L397.5 567.9L399.6 570.6L401.9 572.9L404.2 575.1L406.8 577.0L409.4 578.7L399.9 572.1L390.7 565.0L382.0 557.3L373.7 549.2Z" fill="#290b00" stroke="#290b00" stroke-width="0.9"/>
<path d="M795.1 455.9L794.0 460.5L792.7 465.1L791.2 469.7L789.6 474.4L787.7 479.0L789.4 483.8L790.5 488.3L790.9 492.6L790.8 496.7L790.1 500.5L791.5 497.5L792.7 494.4L794.0 491.4L795.1 488.4L796.2 485.5L797.4 480.0L798.0 474.3L797.7 468.4L796.8 462.2Z" fill="#292700" stroke="#292700" stroke-width="0.9"/>
<path d="M734.4 567.6L731.1 571.3L727.7 574.8L724.3 578.3L720.9 581.6L717.5 584.8L723.7 583.2L729.6 581.1L735.0 578.6L739.9 575.5L744.3 572.0L746.5 569.8L748.8 567.5L751.0 565.1L753.2 562.7L755.4 560.2L752.2 562.5L748.5 564.4L744.3 565.9L739.6 567.0Z" fill="#292700" stroke="#292700" stroke-width="0.9"/>
<path d="M774.2 351.1L775.0 354.8L775.7 358.8L776.3 362.8L776.8 367.0L777.2 371.4L782.3 379.7L787.0 388.1L791.3 396.6L795.0 405.3L798.4 414.0L797.7 410.4L797.1 406.8L796.4 403.4L795.6 400.1L794.7 396.9L791.5 387.5L787.8 378.1L783.7 368.9L779.2 359.9Z" fill="#292100" stroke="#292100" stroke-width="0.9"/>
<path d="M638.5 617.1L634.5 619.1L630.6 621.1L626.7 622.8L622.9 624.4L619.2 625.8L629.5 625.3L639.6 624.3L649.5 622.6L659.2 620.3L668.6 617.4L671.6 616.2L674.6 614.9L677.8 613.4L680.9 611.8L684.1 610.0L675.5 612.5L666.7 614.5L657.5 615.9L648.1 616.8Z" fill="#292100" stroke="#292100" stroke-width="0.9"/>
<path d="M368.9 183.7L371.5 182.1L374.0 180.6L376.5 179.2L378.9 178.0L381.3 176.9L389.8 171.9L398.6 167.7L407.8 164.0L417.3 161.0L427.0 158.4L423.7 159.9L420.3 161.4L416.8 163.2L413.3 165.0L409.8 167.1L400.8 169.2L392.3 172.0L384.1 175.3L376.3 179.2Z" fill="#b20900" stroke="#b20900" stroke-width="0.9"/>
<path d="M280.9 360.4L280.6 357.8L280.5 355.2L280.6 352.4L280.7 349.6L280.9 346.7L280.5 355.1L281.0 363.6L282.8 372.1L285.4 380.7L288.4 389.3L288.6 393.2L288.8 397.1L289.0 400.8L289.4 404.4L289.8 407.8L287.2 398.5L284.9 389.1L282.9 379.6L281.4 370.0Z" fill="#7c0600" stroke="#7c0600" stroke-width="0.9"/>
<path d="M638.5 189.8L641.0 191.7L643.5 193.7L645.8 196.0L647.9 198.5L649.9 201.2L659.9 206.9L669.7 213.1L679.0 219.7L687.8 226.8L696.1 234.4L694.3 231.7L692.3 229.2L690.2 226.9L687.8 224.8L685.4 223.0L676.7 215.5L667.7 208.4L658.2 201.9L648.4 195.7Z" fill="#582100" stroke="#582100" stroke-width="0.9"/>
<path d="M424.8 583.6L421.5 583.1L418.3 582.3L415.2 581.4L412.2 580.2L409.4 578.7L419.2 584.9L429.3 590.7L439.6 596.1L450.0 601.1L460.7 605.6L463.4 607.1L466.3 608.4L469.3 609.4L472.5 610.3L475.7 610.8L465.2 606.2L454.7 601.3L444.6 595.8L434.6 589.9Z" fill="#291000" stroke="#291000" stroke-width="0.9"/>
<path d="M301.2 266.4L302.2 264.2L303.2 262.1L304.3 260.0L305.4 257.9L306.5 255.8L305.9 255.5L305.9 255.5L306.5 255.8L307.5 256.4L309.2 257.4L307.2 261.1L305.2 264.8L303.3 268.6L301.5 272.4L299.8 276.2L298.9 273.6L298.6 271.4L298.9 269.4L299.8 267.7Z" fill="#ab0200" stroke="#ab0200" stroke-width="0.9"/>
<path d="M306.5 255.8L307.6 253.7L308.8 251.7L310.0 249.6L311.2 247.6L312.4 245.6L312.8 243.6L313.7 241.9L315.1 240.6L317.1 239.7L319.6 239.1L317.4 242.7L315.3 246.3L313.2 250.0L311.2 253.7L309.2 257.4L307.5 256.4L306.5 255.8L305.9 255.5L305.9 255.5Z" fill="#af0200" stroke="#af0200" stroke-width="0.9"/>
<path d="M750.3 547.6L747.2 551.8L744.1 555.9L741.0 559.9L737.7 563.8L734.4 567.6L739.6 567.0L744.3 565.9L748.5 564.4L752.2 562.5L755.4 560.2L757.5 557.5L759.6 554.9L761.6 552.1L763.6 549.3L765.6 546.5L763.6 547.4L761.0 548.0L758.0 548.2L754.4 548.1Z" fill="#292700" stroke="#292700" stroke-width="0.9"/>
<path d="M787.7 479.0L785.7 483.6L783.5 488.2L781.2 492.8L778.8 497.4L776.4 502.1L778.8 505.4L780.7 508.4L782.0 511.2L782.7 513.7L782.8 515.9L784.4 512.9L785.9 509.7L787.3 506.7L788.8 503.6L790.1 500.5L790.8 496.7L790.9 492.6L790.5 488.3L789.4 483.8Z" fill="#292700" stroke="#292700" stroke-width="0.9"/>
<path d="M312.4 245.6L313.6 243.6L314.9 241.6L316.2 239.7L317.4 237.8L318.7 235.9L320.1 232.3L322.0 229.1L324.4 226.2L327.4 223.8L330.8 221.7L328.5 225.0L326.2 228.5L324.0 231.9L321.8 235.5L319.6 239.1L317.1 239.7L315.1 240.6L313.7 241.9L312.8 243.6Z" fill="#b30200" stroke="#b30200" stroke-width="0.9"/>
<path d="M296.8 277.0L297.6 274.9L298.5 272.7L299.3 270.6L300.3 268.5L301.2 266.4L299.8 267.7L298.9 269.4L298.6 271.4L298.9 273.6L299.8 276.2L298.1 279.9L296.5 283.7L295.0 287.5L293.6 291.3L292.2 295.1L292.0 291.0L292.3 287.1L293.2 283.5L294.7 280.1Z" fill="#a80200" stroke="#a80200" stroke-width="0.9"/>
<path d="M776.4 502.1L774.0 506.7L771.6 511.3L769.1 516.0L766.6 520.6L764.0 525.2L767.3 527.1L769.9 528.7L772.1 529.9L773.6 530.8L774.7 531.4L776.4 528.4L778.0 525.3L779.7 522.2L781.3 519.1L782.8 515.9L782.7 513.7L782.0 511.2L780.7 508.4L778.8 505.4Z" fill="#292700" stroke="#292700" stroke-width="0.9"/>
<path d="M764.0 525.2L761.4 529.8L758.8 534.3L756.0 538.8L753.2 543.2L750.3 547.6L754.4 548.1L758.0 548.2L761.0 548.0L763.6 547.4L765.6 546.5L767.5 543.5L769.3 540.5L771.1 537.5L772.9 534.5L774.7 531.4L773.6 530.8L772.1 529.9L769.9 528.7L767.3 527.1Z" fill="#292700" stroke="#292700" stroke-width="0.9"/>
<path d="M493.7 610.4L489.9 610.9L486.2 611.2L482.6 611.3L479.1 611.2L475.7 610.8L486.4 615.1L497.2 619.0L508.1 622.7L519.2 626.1L530.4 629.3L533.6 629.9L536.9 630.2L540.3 630.1L543.9 629.7L547.5 629.1L536.5 627.1L525.6 623.5L514.8 619.4L504.2 615.0Z" fill="#291500" stroke="#291500" stroke-width="0.9"/>
<path d="M696.1 234.4L697.8 237.4L699.3 240.6L700.6 244.0L701.8 247.6L702.8 251.4L710.5 259.1L717.8 266.9L724.7 275.0L731.4 283.2L737.9 291.5L736.7 288.2L735.5 285.1L734.1 282.1L732.6 279.4L731.0 276.8L724.8 267.9L718.2 259.2L711.2 250.8L703.9 242.5Z" fill="#3a1e00" stroke="#3a1e00" stroke-width="0.9"/>
<path d="M318.7 235.9L320.0 234.1L321.4 232.3L322.7 230.6L324.0 228.9L325.4 227.2L327.8 222.2L330.8 217.5L334.4 213.3L338.4 209.6L343.0 206.2L340.5 209.1L338.0 212.1L335.6 215.2L333.2 218.4L330.8 221.7L327.4 223.8L324.4 226.2L322.0 229.1L320.1 232.3Z" fill="#b90200" stroke="#b90200" stroke-width="0.9"/>
<path d="M293.6 287.4L294.1 285.4L294.7 283.3L295.4 281.2L296.1 279.1L296.8 277.0L294.7 280.1L293.2 283.5L292.3 287.1L292.0 291.0L292.2 295.1L291.0 298.9L289.8 302.6L288.7 306.3L287.7 310.0L286.7 313.6L286.9 308.0L287.7 302.5L289.0 297.3L291.0 292.2Z" fill="#a60200" stroke="#a60200" stroke-width="0.9"/>
<path d="M737.9 291.5L739.0 294.9L740.0 298.5L741.0 302.2L741.8 306.1L742.6 310.1L749.9 317.8L756.7 325.7L763.0 333.9L768.8 342.4L774.2 351.1L773.4 347.4L772.4 344.0L771.3 340.6L770.1 337.5L768.9 334.5L763.4 325.4L757.4 316.6L751.0 308.1L744.5 299.8Z" fill="#291a00" stroke="#291a00" stroke-width="0.9"/>
<path d="M567.0 622.0L562.9 623.8L558.9 625.4L555.1 626.9L551.3 628.1L547.5 629.1L558.5 630.0L569.4 630.6L580.2 630.7L591.1 630.6L601.8 630.2L605.1 629.6L608.5 628.9L612.0 628.0L615.6 627.0L619.2 625.8L608.8 625.8L598.4 625.3L588.0 624.5L577.5 623.4Z" fill="#291a00" stroke="#291a00" stroke-width="0.9"/>
<path d="M442.6 153.7L445.5 153.2L448.3 153.0L451.0 152.8L453.7 152.9L456.2 153.1L467.4 150.5L478.7 148.7L490.3 147.8L501.9 147.6L513.5 147.8L510.4 147.4L507.2 147.2L503.9 147.2L500.5 147.4L497.0 147.8L485.8 147.5L474.7 147.9L463.8 149.2L453.1 151.2Z" fill="#a91000" stroke="#a91000" stroke-width="0.9"/>
<path d="M298.8 434.9L297.5 432.8L296.2 430.6L295.1 428.3L294.0 425.8L293.1 423.1L295.8 433.2L299.0 443.1L302.8 453.0L307.4 462.6L312.8 471.9L314.0 475.0L315.5 478.0L317.1 480.7L318.8 483.3L320.7 485.7L314.8 476.1L309.7 466.2L305.3 455.9L301.7 445.5Z" fill="#5a0900" stroke="#5a0900" stroke-width="0.9"/>
<path d="M513.5 147.8L516.4 148.3L519.3 149.1L522.0 150.1L524.6 151.3L527.1 152.7L539.0 153.5L550.9 155.2L562.6 157.9L574.1 161.3L585.4 165.2L582.7 163.4L579.9 161.8L577.0 160.5L574.0 159.3L570.8 158.4L559.6 154.6L548.2 151.6L536.6 149.6L525.0 148.4Z" fill="#951900" stroke="#951900" stroke-width="0.9"/>
<path d="M331.7 494.6L329.3 493.2L327.0 491.6L324.8 489.8L322.6 487.8L320.7 485.7L327.0 494.9L333.7 504.0L340.5 512.9L347.6 521.6L354.9 530.1L356.8 532.7L358.9 535.0L361.1 537.1L363.4 539.1L365.9 540.7L358.5 531.9L351.5 522.8L344.7 513.6L338.1 504.1Z" fill="#390900" stroke="#390900" stroke-width="0.9"/>
<path d="M325.4 227.2L326.7 225.6L328.1 224.1L329.4 222.6L330.8 221.2L332.2 219.8L335.8 213.6L340.1 207.8L344.8 202.5L350.1 197.7L356.0 193.5L353.3 195.8L350.7 198.2L348.1 200.8L345.6 203.5L343.0 206.2L338.4 209.6L334.4 213.3L330.8 217.5L327.8 222.2Z" fill="#bf0200" stroke="#bf0200" stroke-width="0.9"/>
<path d="M291.5 297.3L291.8 295.4L292.2 293.4L292.6 291.4L293.1 289.4L293.6 287.4L291.0 292.2L289.0 297.3L287.7 302.5L286.9 308.0L286.7 313.6L285.8 317.2L285.0 320.7L284.2 324.2L283.5 327.6L282.9 330.9L283.5 323.9L284.7 317.0L286.4 310.3L288.6 303.7Z" fill="#a50200" stroke="#a50200" stroke-width="0.9"/>
<path d="M381.3 176.9L383.7 175.9L386.0 175.0L388.3 174.3L390.6 173.7L392.8 173.3L402.2 168.2L411.9 163.8L422.0 160.0L432.2 156.6L442.6 153.7L439.6 154.3L436.6 155.1L433.5 156.1L430.3 157.2L427.0 158.4L417.3 161.0L407.8 164.0L398.6 167.7L389.8 171.9Z" fill="#bb0900" stroke="#bb0900" stroke-width="0.9"/>
<path d="M284.1 371.9L283.3 369.8L282.5 367.6L281.8 365.3L281.3 362.9L280.9 360.4L281.4 370.0L282.9 379.6L284.9 389.1L287.2 398.5L289.8 407.8L290.3 411.2L290.8 414.4L291.5 417.4L292.3 420.3L293.1 423.1L290.7 413.0L288.7 402.9L286.9 392.6L285.3 382.3Z" fill="#800600" stroke="#800600" stroke-width="0.9"/>
<path d="M777.2 371.4L777.5 375.9L777.8 380.5L777.9 385.3L778.0 390.2L778.1 395.3L783.5 403.0L788.5 410.7L793.1 418.5L797.0 426.3L799.4 434.1L799.8 429.9L799.8 425.8L799.5 421.8L798.9 417.8L798.4 414.0L795.0 405.3L791.3 396.6L787.0 388.1L782.3 379.7Z" fill="#292100" stroke="#292100" stroke-width="0.9"/>
<path d="M659.1 603.6L654.9 606.6L650.7 609.5L646.6 612.2L642.5 614.7L638.5 617.1L648.1 616.8L657.5 615.9L666.7 614.5L675.5 612.5L684.1 610.0L687.3 608.1L690.5 606.0L693.8 603.8L697.1 601.5L700.5 599.0L692.8 601.0L684.9 602.4L676.6 603.3L668.0 603.7Z" fill="#292100" stroke="#292100" stroke-width="0.9"/>
<path d="M585.4 165.2L587.9 167.2L590.2 169.4L592.4 171.8L594.5 174.4L596.4 177.2L607.5 181.4L618.4 186.0L629.1 190.8L639.6 195.9L649.9 201.2L647.9 198.5L645.8 196.0L643.5 193.7L641.0 191.7L638.5 189.8L628.3 184.3L617.9 179.0L607.2 174.1L596.4 169.5Z" fill="#7d2000" stroke="#7d2000" stroke-width="0.9"/>
<path d="M380.2 545.7L377.1 545.2L374.1 544.4L371.3 543.4L368.5 542.2L365.9 540.7L373.7 549.2L382.0 557.3L390.7 565.0L399.9 572.1L409.4 578.7L412.2 580.2L415.2 581.4L418.3 582.3L421.5 583.1L424.8 583.6L415.2 576.9L405.9 569.8L397.0 562.2L388.3 554.2Z" fill="#290b00" stroke="#290b00" stroke-width="0.9"/>
<path d="M332.2 219.8L333.5 218.5L334.9 217.2L336.3 216.1L337.7 215.0L339.0 213.9L343.9 206.8L349.4 200.2L355.4 194.2L362.0 188.7L368.9 183.7L366.4 185.4L363.8 187.2L361.2 189.2L358.6 191.3L356.0 193.5L350.1 197.7L344.8 202.5L340.1 207.8L335.8 213.6Z" fill="#c50200" stroke="#c50200" stroke-width="0.9"/>
<path d="M290.6 306.3L290.7 304.6L290.8 302.8L291.0 301.0L291.2 299.2L291.5 297.3L288.6 303.7L286.4 310.3L284.7 317.0L283.5 323.9L282.9 330.9L282.3 334.2L281.9 337.5L281.4 340.6L281.1 343.7L280.9 346.7L281.8 338.4L283.2 330.2L285.2 322.1L287.6 314.1Z" fill="#a50200" stroke="#a50200" stroke-width="0.9"/>
<path d="M778.1 395.3L778.1 400.5L778.0 405.8L777.8 411.3L777.7 416.9L777.5 422.7L782.6 429.5L786.6 436.3L790.0 442.9L792.8 449.5L795.1 455.9L796.1 451.4L797.0 446.9L797.9 442.6L798.7 438.3L799.4 434.1L797.0 426.3L793.1 418.5L788.5 410.7L783.5 403.0Z" fill="#292100" stroke="#292100" stroke-width="0.9"/>
<path d="M680.3 585.9L676.0 589.7L671.8 593.5L667.5 597.0L663.3 600.4L659.1 603.6L668.0 603.7L676.6 603.3L684.9 602.4L692.8 601.0L700.5 599.0L703.8 596.4L707.2 593.7L710.6 590.8L714.0 587.9L717.5 584.8L710.8 585.9L703.7 586.6L696.3 586.8L688.5 586.6Z" fill="#292100" stroke="#292100" stroke-width="0.9"/>
<path d="M443.1 582.5L439.2 583.2L435.4 583.6L431.8 583.9L428.2 583.8L424.8 583.6L434.6 589.9L444.6 595.8L454.7 601.3L465.2 606.2L475.7 610.8L479.1 611.2L482.6 611.3L486.2 611.2L489.9 610.9L493.7 610.4L483.3 605.6L473.0 600.4L462.8 594.8L452.9 588.9Z" fill="#291000" stroke="#291000" stroke-width="0.9"/>
<path d="M649.9 201.2L651.8 204.2L653.4 207.3L655.0 210.7L656.4 214.2L657.6 218.0L667.6 223.7L677.1 230.0L686.2 236.7L694.7 243.9L702.8 251.4L701.8 247.6L700.6 244.0L699.3 240.6L697.8 237.4L696.1 234.4L687.8 226.8L679.0 219.7L669.7 213.1L659.9 206.9Z" fill="#622500" stroke="#622500" stroke-width="0.9"/>
<path d="M742.6 310.1L743.4 314.3L744.0 318.6L744.5 323.0L744.9 327.7L745.1 332.5L752.4 339.9L759.2 347.5L765.6 355.3L771.6 363.3L777.2 371.4L776.8 367.0L776.3 362.8L775.7 358.8L775.0 354.8L774.2 351.1L768.8 342.4L763.0 333.9L756.7 325.7L749.9 317.8Z" fill="#291a00" stroke="#291a00" stroke-width="0.9"/>
<path d="M588.2 610.3L583.8 613.0L579.5 615.4L575.3 617.8L571.1 620.0L567.0 622.0L577.5 623.4L588.0 624.5L598.4 625.3L608.8 625.8L619.2 625.8L622.9 624.4L626.7 622.8L630.6 621.1L634.5 619.1L638.5 617.1L628.7 616.7L618.7 615.7L608.6 614.3L598.4 612.5Z" fill="#291a00" stroke="#291a00" stroke-width="0.9"/>
<path d="M339.0 213.9L340.4 213.0L341.7 212.1L343.0 211.2L344.4 210.5L345.7 209.8L351.8 202.1L358.5 195.0L365.7 188.4L373.3 182.4L381.3 176.9L378.9 178.0L376.5 179.2L374.0 180.6L371.5 182.1L368.9 183.7L362.0 188.7L355.4 194.2L349.4 200.2L343.9 206.8Z" fill="#cb0200" stroke="#cb0200" stroke-width="0.9"/>
<path d="M290.9 314.2L290.8 312.7L290.7 311.2L290.6 309.6L290.6 308.0L290.6 306.3L287.6 314.1L285.2 322.1L283.2 330.2L281.8 338.4L280.9 346.7L280.7 349.6L280.6 352.4L280.5 355.2L280.6 357.8L280.9 360.4L281.8 351.0L283.3 341.7L285.4 332.4L287.9 323.2Z" fill="#a70200" stroke="#a70200" stroke-width="0.9"/>
<path d="M289.5 380.6L288.3 379.1L287.2 377.5L286.1 375.7L285.1 373.9L284.1 371.9L285.3 382.3L286.9 392.6L288.7 402.9L290.7 413.0L293.1 423.1L294.0 425.8L295.1 428.3L296.2 430.6L297.5 432.8L298.8 434.9L296.4 424.1L294.3 413.4L292.5 402.5L290.9 391.6Z" fill="#850700" stroke="#850700" stroke-width="0.9"/>
<path d="M392.8 173.3L394.9 173.0L397.0 172.8L399.0 172.7L400.9 172.8L402.8 173.0L413.1 168.0L423.7 163.7L434.4 159.7L445.2 156.2L456.2 153.1L453.7 152.9L451.0 152.8L448.3 153.0L445.5 153.2L442.6 153.7L432.2 156.6L422.0 160.0L411.9 163.8L402.2 168.2Z" fill="#c40a00" stroke="#c40a00" stroke-width="0.9"/>
<path d="M307.2 442.6L305.3 441.4L303.6 440.0L301.9 438.5L300.3 436.7L298.8 434.9L301.7 445.5L305.3 455.9L309.7 466.2L314.8 476.1L320.7 485.7L322.6 487.8L324.8 489.8L327.0 491.6L329.3 493.2L331.7 494.6L325.5 484.8L319.8 474.7L314.8 464.3L310.6 453.6Z" fill="#620900" stroke="#620900" stroke-width="0.9"/>
<path d="M456.2 153.1L458.7 153.5L461.0 154.1L463.3 154.8L465.4 155.8L467.5 156.9L479.2 154.7L491.2 153.4L503.2 152.8L515.1 152.5L527.1 152.7L524.6 151.3L522.0 150.1L519.3 149.1L516.4 148.3L513.5 147.8L501.9 147.6L490.3 147.8L478.7 148.7L467.4 150.5Z" fill="#b31100" stroke="#b31100" stroke-width="0.9"/>
<path d="M702.8 251.4L703.6 255.4L704.3 259.5L704.9 263.8L705.3 268.3L705.5 272.9L713.2 280.2L720.6 287.6L727.9 295.1L735.3 302.6L742.6 310.1L741.8 306.1L741.0 302.2L740.0 298.5L739.0 294.9L737.9 291.5L731.4 283.2L724.7 275.0L717.8 266.9L710.5 259.1Z" fill="#412100" stroke="#412100" stroke-width="0.9"/>
<path d="M514.1 604.8L509.8 606.3L505.7 607.6L501.6 608.8L497.6 609.7L493.7 610.4L504.2 615.0L514.8 619.4L525.6 623.5L536.5 627.1L547.5 629.1L551.3 628.1L555.1 626.9L558.9 625.4L562.9 623.8L567.0 622.0L556.4 620.2L545.7 618.0L535.1 614.7L524.5 609.9Z" fill="#291500" stroke="#291500" stroke-width="0.9"/>
<path d="M777.5 422.7L776.5 428.5L774.9 434.3L773.2 440.1L771.4 446.1L769.5 452.1L774.4 457.8L778.7 463.4L782.4 468.8L785.4 474.0L787.7 479.0L789.6 474.4L791.2 469.7L792.7 465.1L794.0 460.5L795.1 455.9L792.8 449.5L790.0 442.9L786.6 436.3L782.6 429.5Z" fill="#292100" stroke="#292100" stroke-width="0.9"/>
<path d="M701.7 564.4L697.5 568.9L693.2 573.4L688.9 577.7L684.6 581.9L680.3 585.9L688.5 586.6L696.3 586.8L703.7 586.6L710.8 585.9L717.5 584.8L720.9 581.6L724.3 578.3L727.7 574.8L731.1 571.3L734.4 567.6L728.8 567.8L722.7 567.6L716.1 567.0L709.1 565.9Z" fill="#292100" stroke="#292100" stroke-width="0.9"/>
<path d="M527.1 152.7L529.4 154.3L531.7 156.1L533.8 158.2L535.7 160.4L537.5 162.8L549.7 164.2L561.7 166.6L573.5 169.7L585.1 173.3L596.4 177.2L594.5 174.4L592.4 171.8L590.2 169.4L587.9 167.2L585.4 165.2L574.1 161.3L562.6 157.9L550.9 155.2L539.0 153.5Z" fill="#9f1b00" stroke="#9f1b00" stroke-width="0.9"/>
<path d="M345.3 498.6L342.4 498.2L339.6 497.6L336.8 496.8L334.2 495.8L331.7 494.6L338.1 504.1L344.7 513.6L351.5 522.8L358.5 531.9L365.9 540.7L368.5 542.2L371.3 543.4L374.1 544.4L377.1 545.2L380.2 545.7L372.6 536.8L365.3 527.5L358.4 518.0L351.8 508.4Z" fill="#430b00" stroke="#430b00" stroke-width="0.9"/>
<path d="M345.7 209.8L347.0 209.2L348.2 208.7L349.5 208.2L350.7 207.8L351.9 207.5L359.1 199.6L366.9 192.2L375.1 185.3L383.7 179.0L392.8 173.3L390.6 173.7L388.3 174.3L386.0 175.0L383.7 175.9L381.3 176.9L373.3 182.4L365.7 188.4L358.5 195.0L351.8 202.1Z" fill="#d10200" stroke="#d10200" stroke-width="0.9"/>
<path d="M292.4 320.7L292.0 319.5L291.7 318.3L291.4 317.0L291.1 315.6L290.9 314.2L287.9 323.2L285.4 332.4L283.3 341.7L281.8 351.0L280.9 360.4L281.3 362.9L281.8 365.3L282.5 367.6L283.3 369.8L284.1 371.9L283.8 361.4L285.2 351.1L287.1 340.9L289.5 330.7Z" fill="#a90200" stroke="#a90200" stroke-width="0.9"/>
<path d="M320.9 264.3L306.5 255.8L301.2 266.4Z" fill="#cf0100" stroke="#cf0100" stroke-width="0.9"/>
<path d="M320.9 264.3L312.4 245.6L306.5 255.8Z" fill="#d00100" stroke="#d00100" stroke-width="0.9"/>
<path d="M320.9 264.3L301.2 266.4L296.8 277.0Z" fill="#cd0100" stroke="#cd0100" stroke-width="0.9"/>
<path d="M320.9 264.3L318.7 235.9L312.4 245.6Z" fill="#d20100" stroke="#d20100" stroke-width="0.9"/>
<path d="M320.9 264.3L296.8 277.0L293.6 287.4Z" fill="#cd0100" stroke="#cd0100" stroke-width="0.9"/>
<path d="M320.9 264.3L325.4 227.2L318.7 235.9Z" fill="#d40100" stroke="#d40100" stroke-width="0.9"/>
<path d="M722.4 539.5L715.7 548.2L708.8 556.5L701.7 564.4L713.8 566.7L724.7 567.7L734.4 567.6L739.9 561.3L745.2 554.6L750.3 547.6L742.3 545.9L733.0 543.2Z" fill="#292100" stroke="#292100" stroke-width="0.9"/>
<path d="M769.5 452.1L765.9 462.1L761.4 472.0L756.3 481.8L764.5 489.2L771.2 496.0L776.4 502.1L780.4 494.4L784.2 486.7L787.7 479.0L783.4 470.6L777.4 461.6Z" fill="#292100" stroke="#292100" stroke-width="0.9"/>
<path d="M320.9 264.3L293.6 287.4L291.5 297.3Z" fill="#cc0100" stroke="#cc0100" stroke-width="0.9"/>
<path d="M320.9 264.3L332.2 219.8L325.4 227.2Z" fill="#d60100" stroke="#d60100" stroke-width="0.9"/>
<path d="M296.4 386.3L294.9 385.4L293.5 384.4L292.1 383.3L290.8 382.0L289.5 380.6L290.9 391.6L292.5 402.5L294.3 413.4L296.4 424.1L298.8 434.9L300.3 436.7L301.9 438.5L303.6 440.0L305.3 441.4L307.2 442.6L304.5 431.5L302.1 420.3L300.0 409.1L298.1 397.8Z" fill="#8b0700" stroke="#8b0700" stroke-width="0.9"/>
<path d="M402.8 173.0L404.6 173.4L406.4 173.8L408.1 174.4L409.7 175.1L411.2 175.9L422.2 171.3L433.3 167.1L444.6 163.3L456.0 159.9L467.5 156.9L465.4 155.8L463.3 154.8L461.0 154.1L458.7 153.5L456.2 153.1L445.2 156.2L434.4 159.7L423.7 163.7L413.1 168.0Z" fill="#cc0a00" stroke="#cc0a00" stroke-width="0.9"/>
<path d="M745.1 332.5L745.2 337.4L745.2 342.6L745.0 347.8L744.7 353.2L744.4 358.7L751.9 365.8L759.1 373.0L765.9 380.3L772.2 387.8L778.1 395.3L778.0 390.2L777.9 385.3L777.8 380.5L777.5 375.9L777.2 371.4L771.6 363.3L765.6 355.3L759.2 347.5L752.4 339.9Z" fill="#291a00" stroke="#291a00" stroke-width="0.9"/>
<path d="M611.1 594.9L606.4 598.2L601.8 601.5L597.2 604.5L592.7 607.5L588.2 610.3L598.4 612.5L608.6 614.3L618.7 615.7L628.7 616.7L638.5 617.1L642.5 614.7L646.6 612.2L650.7 609.5L654.9 606.6L659.1 603.6L649.9 602.9L640.5 601.7L630.9 600.0L621.1 597.7Z" fill="#291a00" stroke="#291a00" stroke-width="0.9"/>
<path d="M596.4 177.2L598.2 180.2L599.8 183.4L601.3 186.8L602.6 190.4L603.7 194.2L614.9 198.4L625.9 202.9L636.7 207.7L647.2 212.7L657.6 218.0L656.4 214.2L655.0 210.7L653.4 207.3L651.8 204.2L649.9 201.2L639.6 195.9L629.1 190.8L618.4 186.0L607.5 181.4Z" fill="#862300" stroke="#862300" stroke-width="0.9"/>
<path d="M397.6 544.8L393.9 545.5L390.3 545.9L386.8 546.1L383.5 546.0L380.2 545.7L388.3 554.2L397.0 562.2L405.9 569.8L415.2 576.9L424.8 583.6L428.2 583.8L431.8 583.9L435.4 583.6L439.2 583.2L443.1 582.5L433.5 575.7L424.1 568.6L415.0 561.1L406.1 553.2Z" fill="#290b00" stroke="#290b00" stroke-width="0.9"/>
<path d="M756.3 481.8L751.0 491.6L745.6 501.4L740.2 511.1L749.5 516.6L757.5 521.3L764.0 525.2L768.3 517.5L772.4 509.8L776.4 502.1L771.2 496.0L764.5 489.2Z" fill="#292100" stroke="#292100" stroke-width="0.9"/>
<path d="M740.2 511.1L734.6 520.8L728.7 530.4L722.4 539.5L733.0 543.2L742.3 545.9L750.3 547.6L755.1 540.3L759.7 532.8L764.0 525.2L757.5 521.3L749.5 516.6Z" fill="#292100" stroke="#292100" stroke-width="0.9"/>
<path d="M320.9 264.3L291.5 297.3L290.6 306.3Z" fill="#cc0100" stroke="#cc0100" stroke-width="0.9"/>
<path d="M320.9 264.3L339.0 213.9L332.2 219.8Z" fill="#d80100" stroke="#d80100" stroke-width="0.9"/>
<path d="M294.9 325.6L294.3 324.8L293.8 323.8L293.3 322.9L292.8 321.8L292.4 320.7L289.5 330.7L287.1 340.9L285.2 351.1L283.8 361.4L284.1 371.9L285.1 373.9L286.1 375.7L287.2 377.5L288.3 379.1L289.5 380.6L288.4 369.5L288.6 358.4L290.3 347.4L292.4 336.5Z" fill="#ac0200" stroke="#ac0200" stroke-width="0.9"/>
<path d="M351.9 207.5L353.0 207.3L354.2 207.1L355.3 207.1L356.4 207.1L357.4 207.2L365.6 199.2L374.3 191.8L383.4 184.9L392.9 178.6L402.8 173.0L400.9 172.8L399.0 172.7L397.0 172.8L394.9 173.0L392.8 173.3L383.7 179.0L375.1 185.3L366.9 192.2L359.1 199.6Z" fill="#d70200" stroke="#d70200" stroke-width="0.9"/>
<path d="M467.5 156.9L469.5 158.2L471.3 159.7L473.1 161.3L474.7 163.1L476.2 165.1L488.4 163.5L500.7 162.7L513.0 162.3L525.3 162.3L537.5 162.8L535.7 160.4L533.8 158.2L531.7 156.1L529.4 154.3L527.1 152.7L515.1 152.5L503.2 152.8L491.2 153.4L479.2 154.7Z" fill="#bc1200" stroke="#bc1200" stroke-width="0.9"/>
<path d="M318.1 446.2L315.7 445.8L313.4 445.3L311.3 444.6L309.2 443.7L307.2 442.6L310.6 453.6L314.8 464.3L319.8 474.7L325.5 484.8L331.7 494.6L334.2 495.8L336.8 496.8L339.6 497.6L342.4 498.2L345.3 498.6L338.8 488.7L332.7 478.5L327.0 468.1L322.1 457.3Z" fill="#6b0a00" stroke="#6b0a00" stroke-width="0.9"/>
<path d="M320.9 264.3L290.6 306.3L290.9 314.2Z" fill="#cd0100" stroke="#cd0100" stroke-width="0.9"/>
<path d="M320.9 264.3L345.7 209.8L339.0 213.9Z" fill="#da0100" stroke="#da0100" stroke-width="0.9"/>
<path d="M657.6 218.0L658.6 221.9L659.5 226.1L660.2 230.5L660.7 235.0L661.1 239.8L670.9 245.7L680.2 252.1L688.9 258.9L697.4 265.9L705.5 272.9L705.3 268.3L704.9 263.8L704.3 259.5L703.6 255.4L702.8 251.4L694.7 243.9L686.2 236.7L677.1 230.0L667.6 223.7Z" fill="#692800" stroke="#692800" stroke-width="0.9"/>
<path d="M463.8 575.5L459.5 577.4L455.2 579.0L451.1 580.4L447.0 581.6L443.1 582.5L452.9 588.9L462.8 594.8L473.0 600.4L483.3 605.6L493.7 610.4L497.6 609.7L501.6 608.8L505.7 607.6L509.8 606.3L514.1 604.8L503.8 599.4L493.6 593.8L483.6 588.0L473.6 581.9Z" fill="#291000" stroke="#291000" stroke-width="0.9"/>
<path d="M705.5 272.9L705.5 281.0L705.1 289.5L704.3 298.4L718.0 309.5L731.9 320.7L745.1 332.5L744.6 324.6L743.8 317.1L742.6 310.1L730.4 297.6L718.2 285.2Z" fill="#472400" stroke="#472400" stroke-width="0.9"/>
<path d="M536.6 594.2L528.9 598.4L521.4 601.8L514.1 604.8L531.5 613.2L549.3 618.8L567.0 622.0L573.9 618.5L580.9 614.6L588.2 610.3L571.1 606.0L553.9 600.8Z" fill="#291500" stroke="#291500" stroke-width="0.9"/>
<path d="M320.9 264.3L290.9 314.2L292.4 320.7Z" fill="#ce0100" stroke="#ce0100" stroke-width="0.9"/>
<path d="M320.9 264.3L351.9 207.5L345.7 209.8Z" fill="#dd0100" stroke="#dd0100" stroke-width="0.9"/>
<path d="M298.5 328.9L297.7 328.4L296.9 327.8L296.2 327.1L295.5 326.4L294.9 325.6L292.4 336.5L290.3 347.4L288.6 358.4L288.4 369.5L289.5 380.6L290.8 382.0L292.1 383.3L293.5 384.4L294.9 385.4L296.4 386.3L294.8 374.8L294.0 363.2L295.0 351.7L296.5 340.2Z" fill="#b00200" stroke="#b00200" stroke-width="0.9"/>
<path d="M357.4 207.2L358.4 207.3L359.4 207.5L360.3 207.8L361.2 208.2L362.0 208.7L371.0 201.0L380.5 193.9L390.3 187.3L400.6 181.3L411.2 175.9L409.7 175.1L408.1 174.4L406.4 173.8L404.6 173.4L402.8 173.0L392.9 178.6L383.4 184.9L374.3 191.8L365.6 199.2Z" fill="#dd0200" stroke="#dd0200" stroke-width="0.9"/>
<path d="M320.9 264.3L292.4 320.7L294.9 325.6Z" fill="#cf0100" stroke="#cf0100" stroke-width="0.9"/>
<path d="M320.9 264.3L357.4 207.2L351.9 207.5Z" fill="#df0100" stroke="#df0100" stroke-width="0.9"/>
<path d="M744.4 358.7L743.6 368.3L742.6 378.1L741.4 388.4L754.6 399.6L766.6 411.1L777.5 422.7L777.8 413.2L778.0 404.0L778.1 395.3L768.0 382.8L756.8 370.6Z" fill="#291a00" stroke="#291a00" stroke-width="0.9"/>
<path d="M635.3 575.2L627.2 582.3L619.1 588.9L611.1 594.9L627.7 599.3L643.7 602.2L659.1 603.6L666.1 598.2L673.2 592.3L680.3 585.9L666.1 583.6L651.0 580.1Z" fill="#291a00" stroke="#291a00" stroke-width="0.9"/>
<path d="M537.5 162.8L539.2 165.5L540.8 168.3L542.2 171.3L543.5 174.5L544.6 177.9L556.9 180.0L568.9 183.0L580.8 186.5L592.4 190.2L603.7 194.2L602.6 190.4L601.3 186.8L599.8 183.4L598.2 180.2L596.4 177.2L585.1 173.3L573.5 169.7L561.7 166.6L549.7 164.2Z" fill="#a81c00" stroke="#a81c00" stroke-width="0.9"/>
<path d="M361.1 497.5L357.7 498.1L354.5 498.5L351.3 498.8L348.3 498.8L345.3 498.6L351.8 508.4L358.4 518.0L365.3 527.5L372.6 536.8L380.2 545.7L383.5 546.0L386.8 546.1L390.3 545.9L393.9 545.5L397.6 544.8L389.6 535.9L382.0 526.7L374.8 517.1L367.8 507.4Z" fill="#4e0d00" stroke="#4e0d00" stroke-width="0.9"/>
<path d="M411.2 175.9L412.7 176.9L414.0 178.0L415.3 179.2L416.5 180.5L417.6 182.0L429.1 177.8L440.7 174.1L452.4 170.6L464.3 167.6L476.2 165.1L474.7 163.1L473.1 161.3L471.3 159.7L469.5 158.2L467.5 156.9L456.0 159.9L444.6 163.3L433.3 167.1L422.2 171.3Z" fill="#d40b00" stroke="#d40b00" stroke-width="0.9"/>
<path d="M304.6 388.9L302.9 388.7L301.2 388.3L299.5 387.8L297.9 387.1L296.4 386.3L298.1 397.8L300.0 409.1L302.1 420.3L304.5 431.5L307.2 442.6L309.2 443.7L311.3 444.6L313.4 445.3L315.7 445.8L318.1 446.2L314.7 434.9L311.9 423.5L309.3 412.1L306.9 400.5Z" fill="#920700" stroke="#920700" stroke-width="0.9"/>
<path d="M320.9 264.3L294.9 325.6L298.5 328.9Z" fill="#d10100" stroke="#d10100" stroke-width="0.9"/>
<path d="M320.9 264.3L362.0 208.7L357.4 207.2Z" fill="#e10100" stroke="#e10100" stroke-width="0.9"/>
<path d="M362.0 208.7L362.8 209.2L363.6 209.8L364.3 210.4L365.0 211.2L365.6 212.0L375.2 204.9L385.2 198.3L395.6 192.2L406.5 186.8L417.6 182.0L416.5 180.5L415.3 179.2L414.0 178.0L412.7 176.9L411.2 175.9L400.6 181.3L390.3 187.3L380.5 193.9L371.0 201.0Z" fill="#e20200" stroke="#e20200" stroke-width="0.9"/>
<path d="M303.0 330.4L302.1 330.2L301.1 330.0L300.2 329.7L299.3 329.3L298.5 328.9L296.5 340.2L295.0 351.7L294.0 363.2L294.8 374.8L296.4 386.3L297.9 387.1L299.5 387.8L301.2 388.3L302.9 388.7L304.6 388.9L302.4 377.2L300.8 365.4L300.9 353.6L301.8 342.0Z" fill="#b50200" stroke="#b50200" stroke-width="0.9"/>
<path d="M603.7 194.2L605.3 200.9L606.5 208.0L607.2 215.7L625.7 223.0L643.8 230.9L661.1 239.8L660.4 232.0L659.2 224.7L657.6 218.0L640.2 209.3L622.3 201.4Z" fill="#8e2400" stroke="#8e2400" stroke-width="0.9"/>
<path d="M417.4 538.0L410.6 540.9L404.0 543.2L397.6 544.8L412.0 558.5L427.2 571.0L443.1 582.5L449.7 580.8L456.6 578.5L463.8 575.5L447.8 563.9L432.3 551.5Z" fill="#350e00" stroke="#350e00" stroke-width="0.9"/>
<path d="M320.9 264.3L365.6 212.0L362.0 208.7Z" fill="#e30100" stroke="#e30100" stroke-width="0.9"/>
<path d="M320.9 264.3L298.5 328.9L303.0 330.4Z" fill="#d20100" stroke="#d20100" stroke-width="0.9"/>
<path d="M331.1 445.4L326.5 446.1L322.2 446.4L318.1 446.2L325.3 464.5L334.7 481.9L345.3 498.6L350.3 498.8L355.6 498.4L361.1 497.5L349.9 480.9L339.5 463.6Z" fill="#750b00" stroke="#750b00" stroke-width="0.9"/>
<path d="M476.2 165.1L478.5 168.7L480.5 172.8L482.1 177.3L503.0 176.3L523.8 176.4L544.6 177.9L542.6 172.4L540.3 167.3L537.5 162.8L517.1 162.3L496.6 162.9Z" fill="#c41300" stroke="#c41300" stroke-width="0.9"/>
<path d="M741.4 388.4L740.1 399.1L738.8 410.1L737.0 421.6L749.2 432.0L760.1 442.2L769.5 452.1L772.6 442.1L775.5 432.3L777.5 422.7L766.6 411.1L754.6 399.6Z" fill="#291a00" stroke="#291a00" stroke-width="0.9"/>
<path d="M659.6 550.8L651.5 559.4L643.4 567.5L635.3 575.2L651.0 580.1L666.1 583.6L680.3 585.9L687.5 579.1L694.6 571.9L701.7 564.4L688.6 561.0L674.5 556.4Z" fill="#291a00" stroke="#291a00" stroke-width="0.9"/>
<path d="M704.3 298.4L703.3 307.5L702.1 316.8L700.9 326.3L716.5 336.5L731.0 347.3L744.4 358.7L744.9 349.6L745.2 340.8L745.1 332.5L731.9 320.7L718.0 309.5Z" fill="#492500" stroke="#492500" stroke-width="0.9"/>
<path d="M560.6 575.5L552.5 582.4L544.5 588.8L536.6 594.2L553.9 600.8L571.1 606.0L588.2 610.3L595.7 605.5L603.3 600.4L611.1 594.9L594.4 589.2L577.5 582.7Z" fill="#291500" stroke="#291500" stroke-width="0.9"/>
<path d="M320.9 264.3L368.0 217.0L365.6 212.0Z" fill="#e40100" stroke="#e40100" stroke-width="0.9"/>
<path d="M320.9 264.3L303.0 330.4L308.4 330.1Z" fill="#d40100" stroke="#d40100" stroke-width="0.9"/>
<path d="M661.1 239.8L661.3 248.1L661.0 256.9L660.1 266.2L675.7 276.6L690.4 287.3L704.3 298.4L705.1 289.5L705.5 281.0L705.5 272.9L691.8 261.2L677.1 250.0Z" fill="#6e2a00" stroke="#6e2a00" stroke-width="0.9"/>
<path d="M486.3 562.8L478.6 567.6L471.1 571.9L463.8 575.5L480.2 586.0L497.0 595.7L514.1 604.8L521.4 601.8L528.9 598.4L536.6 594.2L519.5 584.3L502.8 573.7Z" fill="#291000" stroke="#291000" stroke-width="0.9"/>
<path d="M417.6 182.0L419.3 184.6L420.7 187.6L421.9 190.8L441.7 185.3L461.7 180.7L482.1 177.3L480.5 172.8L478.5 168.7L476.2 165.1L456.4 169.6L436.8 175.3Z" fill="#da0b00" stroke="#da0b00" stroke-width="0.9"/>
<path d="M314.1 388.4L310.8 388.9L307.7 389.1L304.6 388.9L308.5 408.2L312.8 427.3L318.1 446.2L322.2 446.4L326.5 446.1L331.1 445.4L324.7 426.6L319.2 407.6Z" fill="#9a0800" stroke="#9a0800" stroke-width="0.9"/>
<path d="M365.6 212.0L366.6 213.5L367.4 215.2L368.0 217.0L384.9 206.8L402.9 198.0L421.9 190.8L420.7 187.6L419.3 184.6L417.6 182.0L399.2 190.3L381.8 200.4Z" fill="#e60200" stroke="#e60200" stroke-width="0.9"/>
<path d="M308.4 330.1L306.5 330.4L304.7 330.5L303.0 330.4L301.2 349.7L301.2 369.3L304.6 388.9L307.7 389.1L310.8 388.9L314.1 388.4L309.3 368.8L308.0 349.3Z" fill="#bb0200" stroke="#bb0200" stroke-width="0.9"/>
<path d="M737.0 421.6L732.9 433.1L728.6 444.7L723.4 456.3L735.7 465.3L746.7 473.8L756.3 481.8L761.4 472.0L765.9 462.1L769.5 452.1L760.1 442.2L749.2 432.0Z" fill="#291a00" stroke="#291a00" stroke-width="0.9"/>
<path d="M683.6 522.6L675.7 532.4L667.7 541.8L659.6 550.8L674.5 556.4L688.6 561.0L701.7 564.4L708.8 556.5L715.7 548.2L722.4 539.5L710.6 534.8L697.6 529.1Z" fill="#291a00" stroke="#291a00" stroke-width="0.9"/>
<path d="M320.9 264.3L369.3 223.6L368.0 217.0Z" fill="#e60100" stroke="#e60100" stroke-width="0.9"/>
<path d="M320.9 264.3L308.4 330.1L314.4 327.9Z" fill="#d70100" stroke="#d70100" stroke-width="0.9"/>
<path d="M544.6 177.9L546.1 183.9L547.2 190.4L548.0 197.3L568.4 202.5L588.1 208.8L607.2 215.7L606.5 208.0L605.3 200.9L603.7 194.2L584.7 187.7L564.9 181.9Z" fill="#ae1d00" stroke="#ae1d00" stroke-width="0.9"/>
<path d="M378.8 491.4L372.7 494.0L366.8 496.1L361.1 497.5L372.4 513.9L384.5 529.8L397.6 544.8L404.0 543.2L410.6 540.9L417.4 538.0L403.5 523.3L390.8 507.6Z" fill="#5b0f00" stroke="#5b0f00" stroke-width="0.9"/>
<path d="M723.4 456.3L717.2 467.6L710.8 478.9L704.5 490.1L717.6 497.9L729.5 504.9L740.2 511.1L745.6 501.4L751.0 491.6L756.3 481.8L746.7 473.8L735.7 465.3Z" fill="#291a00" stroke="#291a00" stroke-width="0.9"/>
<path d="M704.5 490.1L698.1 501.4L691.1 512.2L683.6 522.6L697.6 529.1L710.6 534.8L722.4 539.5L728.7 530.4L734.6 520.8L740.2 511.1L729.5 504.9L717.6 497.9Z" fill="#291a00" stroke="#291a00" stroke-width="0.9"/>
<path d="M320.9 264.3L369.3 231.7L369.3 223.6Z" fill="#e60100" stroke="#e60100" stroke-width="0.9"/>
<path d="M320.9 264.3L314.4 327.9L320.8 324.0Z" fill="#d90100" stroke="#d90100" stroke-width="0.9"/>
<path d="M320.9 264.3L368.1 240.9L369.3 231.7Z" fill="#e70100" stroke="#e70100" stroke-width="0.9"/>
<path d="M320.9 264.3L320.8 324.0L327.5 318.4Z" fill="#db0100" stroke="#db0100" stroke-width="0.9"/>
<path d="M368.0 217.0L368.6 219.1L369.0 221.3L369.3 223.6L386.3 215.1L404.6 207.9L423.9 202.3L423.5 198.2L422.8 194.4L421.9 190.8L402.9 198.0L384.9 206.8Z" fill="#e90200" stroke="#e90200" stroke-width="0.9"/>
<path d="M314.4 327.9L312.3 328.8L310.3 329.5L308.4 330.1L308.0 349.3L309.3 368.8L314.1 388.4L317.4 387.5L320.9 386.3L324.4 384.7L318.3 365.6L315.7 346.6Z" fill="#c10200" stroke="#c10200" stroke-width="0.9"/>
<path d="M700.9 326.3L699.6 336.0L698.1 346.1L696.1 356.6L712.0 366.8L727.2 377.4L741.4 388.4L742.6 378.1L743.6 368.3L744.4 358.7L731.0 347.3L716.5 336.5Z" fill="#4a2500" stroke="#4a2500" stroke-width="0.9"/>
<path d="M585.2 552.9L576.9 560.7L568.7 568.2L560.6 575.5L577.5 582.7L594.4 589.2L611.1 594.9L619.1 588.9L627.2 582.3L635.3 575.2L619.0 569.0L602.2 561.5Z" fill="#291500" stroke="#291500" stroke-width="0.9"/>
<path d="M482.1 177.3L483.4 182.2L484.4 187.6L485.0 193.2L506.0 193.4L527.1 194.6L548.0 197.3L547.2 190.4L546.1 183.9L544.6 177.9L523.8 176.4L503.0 176.3Z" fill="#ca1300" stroke="#ca1300" stroke-width="0.9"/>
<path d="M345.8 440.4L340.7 442.5L335.8 444.2L331.1 445.4L339.5 463.6L349.9 480.9L361.1 497.5L366.8 496.1L372.7 494.0L378.8 491.4L366.9 475.1L355.4 458.2Z" fill="#800c00" stroke="#800c00" stroke-width="0.9"/>
<path d="M320.9 264.3L365.9 251.0L368.1 240.9Z" fill="#e70100" stroke="#e70100" stroke-width="0.9"/>
<path d="M320.9 264.3L327.5 318.4L334.2 311.3Z" fill="#de0100" stroke="#de0100" stroke-width="0.9"/>
<path d="M421.9 190.8L422.8 194.4L423.5 198.2L423.9 202.3L444.0 198.3L464.3 195.3L485.0 193.2L484.4 187.6L483.4 182.2L482.1 177.3L461.7 180.7L441.7 185.3Z" fill="#df0b00" stroke="#df0b00" stroke-width="0.9"/>
<path d="M324.4 384.7L320.9 386.3L317.4 387.5L314.1 388.4L319.2 407.6L324.7 426.6L331.1 445.4L335.8 444.2L340.7 442.5L345.8 440.4L338.2 422.0L331.2 403.5Z" fill="#a30800" stroke="#a30800" stroke-width="0.9"/>
<path d="M607.2 215.7L607.4 223.7L607.2 232.2L606.6 241.1L625.2 248.7L643.2 256.9L660.1 266.2L661.0 256.9L661.3 248.1L661.1 239.8L643.8 230.9L625.7 223.0Z" fill="#932600" stroke="#932600" stroke-width="0.9"/>
<path d="M439.1 525.6L431.7 530.3L424.5 534.5L417.4 538.0L432.3 551.5L447.8 563.9L463.8 575.5L471.1 571.9L478.6 567.6L486.3 562.8L470.1 551.2L454.4 538.8Z" fill="#431100" stroke="#431100" stroke-width="0.9"/>
<path d="M320.9 264.3L362.7 261.8L365.9 251.0Z" fill="#e70100" stroke="#e70100" stroke-width="0.9"/>
<path d="M320.9 264.3L334.2 311.3L340.9 302.9Z" fill="#e00100" stroke="#e00100" stroke-width="0.9"/>
<path d="M320.9 264.3L358.5 272.7L362.7 261.8Z" fill="#e60100" stroke="#e60100" stroke-width="0.9"/>
<path d="M320.9 264.3L340.9 302.9L347.3 293.5Z" fill="#e20100" stroke="#e20100" stroke-width="0.9"/>
<path d="M660.1 266.2L658.7 275.9L656.9 286.0L654.6 296.3L670.2 306.3L685.3 316.4L700.9 326.3L702.1 316.8L703.3 307.5L704.3 298.4L690.4 287.3L675.7 276.6Z" fill="#712b00" stroke="#712b00" stroke-width="0.9"/>
<path d="M509.9 545.1L502.0 551.4L494.1 557.4L486.3 562.8L502.8 573.7L519.5 584.3L536.6 594.2L544.5 588.8L552.5 582.4L560.6 575.5L543.5 567.6L526.5 556.9Z" fill="#2b1000" stroke="#2b1000" stroke-width="0.9"/>
<path d="M320.9 264.3L353.3 283.4L358.5 272.7Z" fill="#e50100" stroke="#e50100" stroke-width="0.9"/>
<path d="M320.9 264.3L347.3 293.5L353.3 283.4Z" fill="#e30100" stroke="#e30100" stroke-width="0.9"/>
<path d="M369.3 223.6L369.4 226.2L369.4 228.8L369.3 231.7L386.2 225.1L404.3 219.9L423.5 216.1L423.9 211.3L424.0 206.6L423.9 202.3L404.6 207.9L386.3 215.1Z" fill="#ec0200" stroke="#ec0200" stroke-width="0.9"/>
<path d="M320.8 324.0L318.6 325.5L316.5 326.8L314.4 327.9L315.7 346.6L318.3 365.6L324.4 384.7L327.9 382.8L331.5 380.5L335.1 377.9L328.4 359.7L324.1 341.8Z" fill="#c70200" stroke="#c70200" stroke-width="0.9"/>
<path d="M696.1 356.6L693.8 367.4L691.4 378.5L689.0 390.0L706.0 400.4L722.2 411.0L737.0 421.6L738.8 410.1L740.1 399.1L741.4 388.4L727.2 377.4L712.0 366.8Z" fill="#482400" stroke="#482400" stroke-width="0.9"/>
<path d="M610.7 527.6L602.2 536.6L593.6 544.9L585.2 552.9L602.2 561.5L619.0 569.0L635.3 575.2L643.4 567.5L651.5 559.4L659.6 550.8L643.9 544.1L627.6 536.4Z" fill="#291500" stroke="#291500" stroke-width="0.9"/>
<path d="M548.0 197.3L548.3 204.6L548.2 212.3L547.7 220.4L568.0 226.7L587.6 233.7L606.6 241.1L607.2 232.2L607.4 223.7L607.2 215.7L588.1 208.8L568.4 202.5Z" fill="#b31e00" stroke="#b31e00" stroke-width="0.9"/>
<path d="M398.0 480.4L391.5 484.6L385.1 488.3L378.8 491.4L390.8 507.6L403.5 523.3L417.4 538.0L424.5 534.5L431.7 530.3L439.1 525.6L424.4 511.4L410.9 496.2Z" fill="#681100" stroke="#681100" stroke-width="0.9"/>
<path d="M369.3 231.7L369.0 234.6L368.6 237.7L368.1 240.9L384.4 236.6L402.1 233.6L420.9 231.8L422.0 226.4L422.9 221.1L423.5 216.1L404.3 219.9L386.2 225.1Z" fill="#ed0200" stroke="#ed0200" stroke-width="0.9"/>
<path d="M327.5 318.4L325.3 320.4L323.0 322.3L320.8 324.0L324.1 341.8L328.4 359.7L335.1 377.9L338.7 374.9L342.4 371.7L346.3 368.1L339.0 351.4L332.7 334.8Z" fill="#cd0200" stroke="#cd0200" stroke-width="0.9"/>
<path d="M423.9 202.3L424.0 206.6L423.9 211.3L423.5 216.1L443.6 213.8L464.0 212.7L484.7 212.3L485.1 205.6L485.2 199.3L485.0 193.2L464.3 195.3L444.0 198.3Z" fill="#e20b00" stroke="#e20b00" stroke-width="0.9"/>
<path d="M335.1 377.9L331.5 380.5L327.9 382.8L324.4 384.7L331.2 403.5L338.2 422.0L345.8 440.4L351.1 437.8L356.4 434.7L361.8 431.2L352.7 413.6L343.9 395.9Z" fill="#ac0900" stroke="#ac0900" stroke-width="0.9"/>
<path d="M485.0 193.2L485.2 199.3L485.1 205.6L484.7 212.3L505.7 213.8L526.8 216.5L547.7 220.4L548.2 212.3L548.3 204.6L548.0 197.3L527.1 194.6L506.0 193.4Z" fill="#cf1400" stroke="#cf1400" stroke-width="0.9"/>
<path d="M361.8 431.2L356.4 434.7L351.1 437.8L345.8 440.4L355.4 458.2L366.9 475.1L378.8 491.4L385.1 488.3L391.5 484.6L398.0 480.4L385.0 464.7L372.5 448.4Z" fill="#8c0d00" stroke="#8c0d00" stroke-width="0.9"/>
<path d="M689.0 390.0L686.5 401.9L683.9 414.3L678.8 426.8L694.9 437.0L709.8 446.9L723.4 456.3L728.6 444.7L732.9 433.1L737.0 421.6L722.2 411.0L706.0 400.4Z" fill="#442200" stroke="#442200" stroke-width="0.9"/>
<path d="M636.1 497.8L627.7 508.2L619.2 518.1L610.7 527.6L627.6 536.4L643.9 544.1L659.6 550.8L667.7 541.8L675.7 532.4L683.6 522.6L668.6 515.1L652.7 506.8Z" fill="#2b1600" stroke="#2b1600" stroke-width="0.9"/>
<path d="M368.1 240.9L367.5 244.2L366.7 247.6L365.9 251.0L381.4 249.3L398.1 248.7L416.1 249.2L417.9 243.3L419.5 237.5L420.9 231.8L402.1 233.6L384.4 236.6Z" fill="#ed0200" stroke="#ed0200" stroke-width="0.9"/>
<path d="M334.2 311.3L332.0 313.8L329.7 316.2L327.5 318.4L332.7 334.8L339.0 351.4L346.3 368.1L350.5 364.3L354.7 360.2L358.9 355.8L349.6 340.7L341.3 325.8Z" fill="#d40200" stroke="#d40200" stroke-width="0.9"/>
<path d="M606.6 241.1L605.5 250.3L604.0 259.8L602.1 269.7L620.6 277.7L638.3 286.5L654.6 296.3L656.9 286.0L658.7 275.9L660.1 266.2L643.2 256.9L625.2 248.7Z" fill="#962600" stroke="#962600" stroke-width="0.9"/>
<path d="M461.7 508.0L454.1 514.4L446.5 520.3L439.1 525.6L454.4 538.8L470.1 551.2L486.3 562.8L494.1 557.4L502.0 551.4L509.9 545.1L493.6 533.2L477.5 520.9Z" fill="#501500" stroke="#501500" stroke-width="0.9"/>
<path d="M654.6 296.3L651.9 306.8L648.7 317.6L645.2 328.5L661.9 337.7L679.3 346.9L696.1 356.6L698.1 346.1L699.6 336.0L700.9 326.3L685.3 316.4L670.2 306.3Z" fill="#722b00" stroke="#722b00" stroke-width="0.9"/>
<path d="M534.2 523.6L526.0 531.1L518.0 538.3L509.9 545.1L526.5 556.9L543.5 567.6L560.6 575.5L568.7 568.2L576.9 560.7L585.2 552.9L568.2 543.7L551.2 534.2Z" fill="#391500" stroke="#391500" stroke-width="0.9"/>
<path d="M678.8 426.8L673.0 439.2L666.0 451.3L659.1 463.4L675.2 472.9L690.4 481.8L704.5 490.1L710.8 478.9L717.2 467.6L723.4 456.3L709.8 446.9L694.9 437.0Z" fill="#3d1f00" stroke="#3d1f00" stroke-width="0.9"/>
<path d="M659.1 463.4L652.1 475.5L644.3 487.0L636.1 497.8L652.7 506.8L668.6 515.1L683.6 522.6L691.1 512.2L698.1 501.4L704.5 490.1L690.4 481.8L675.2 472.9Z" fill="#351b00" stroke="#351b00" stroke-width="0.9"/>
<path d="M365.9 251.0L364.9 254.6L363.9 258.2L362.7 261.8L377.1 262.9L392.7 264.9L409.4 267.8L411.8 261.5L414.0 255.3L416.1 249.2L398.1 248.7L381.4 249.3Z" fill="#ec0200" stroke="#ec0200" stroke-width="0.9"/>
<path d="M340.9 302.9L338.7 305.8L336.4 308.6L334.2 311.3L341.3 325.8L349.6 340.7L358.9 355.8L363.0 351.2L367.0 346.3L370.9 341.2L359.6 328.0L349.6 315.2Z" fill="#d90200" stroke="#d90200" stroke-width="0.9"/>
<path d="M423.5 216.1L422.9 221.1L422.0 226.4L420.9 231.8L440.5 231.4L460.8 232.4L481.3 234.1L482.8 226.6L483.9 219.3L484.7 212.3L464.0 212.7L443.6 213.8Z" fill="#e40c00" stroke="#e40c00" stroke-width="0.9"/>
<path d="M346.3 368.1L342.4 371.7L338.7 374.9L335.1 377.9L343.9 395.9L352.7 413.6L361.8 431.2L367.4 427.3L373.0 422.9L378.7 418.1L367.7 401.7L356.7 385.1Z" fill="#b60900" stroke="#b60900" stroke-width="0.9"/>
<path d="M362.7 261.8L361.4 265.4L360.0 269.1L358.5 272.7L371.8 276.8L386.3 281.7L401.7 287.3L404.3 280.7L406.9 274.2L409.4 267.8L392.7 264.9L377.1 262.9Z" fill="#ea0200" stroke="#ea0200" stroke-width="0.9"/>
<path d="M347.3 293.5L345.2 296.7L343.0 299.8L340.9 302.9L349.6 315.2L359.6 328.0L370.9 341.2L374.6 335.8L378.3 330.3L382.0 324.5L369.3 313.6L357.7 303.3Z" fill="#df0200" stroke="#df0200" stroke-width="0.9"/>
<path d="M547.7 220.4L546.7 228.7L545.4 237.4L543.7 246.4L563.8 253.8L583.2 261.8L602.1 269.7L604.0 259.8L605.5 250.3L606.6 241.1L587.6 233.7L568.0 226.7Z" fill="#b61e00" stroke="#b61e00" stroke-width="0.9"/>
<path d="M418.1 464.9L411.4 470.6L404.6 475.7L398.0 480.4L410.9 496.2L424.4 511.4L439.1 525.6L446.5 520.3L454.1 514.4L461.7 508.0L446.4 494.4L432.0 479.8Z" fill="#751400" stroke="#751400" stroke-width="0.9"/>
<path d="M358.5 272.7L356.9 276.3L355.1 279.9L353.3 283.4L365.3 290.4L378.4 298.1L392.5 306.5L395.8 300.2L398.8 293.8L401.7 287.3L386.3 281.7L371.8 276.8Z" fill="#e70200" stroke="#e70200" stroke-width="0.9"/>
<path d="M353.3 283.4L351.4 286.8L349.4 290.2L347.3 293.5L357.7 303.3L369.3 313.6L382.0 324.5L385.6 318.6L389.1 312.6L392.5 306.5L378.4 298.1L365.3 290.4Z" fill="#e30200" stroke="#e30200" stroke-width="0.9"/>
<path d="M484.7 212.3L483.9 219.3L482.8 226.6L481.3 234.1L502.0 236.8L523.0 241.2L543.7 246.4L545.4 237.4L546.7 228.7L547.7 220.4L526.8 216.5L505.7 213.8Z" fill="#d11400" stroke="#d11400" stroke-width="0.9"/>
<path d="M378.7 418.1L373.0 422.9L367.4 427.3L361.8 431.2L372.5 448.4L385.0 464.7L398.0 480.4L404.6 475.7L411.4 470.6L418.1 464.9L403.8 450.0L390.3 434.4Z" fill="#970f00" stroke="#970f00" stroke-width="0.9"/>
<path d="M558.5 495.9L550.5 505.6L542.4 515.2L534.2 523.6L551.2 534.2L568.2 543.7L585.2 552.9L593.6 544.9L602.2 536.6L610.7 527.6L593.4 517.8L575.9 507.0Z" fill="#461a00" stroke="#461a00" stroke-width="0.9"/>
<path d="M645.2 328.5L641.5 339.4L638.0 350.2L634.7 361.0L653.2 370.2L671.3 379.9L689.0 390.0L691.4 378.5L693.8 367.4L696.1 356.6L679.3 346.9L661.9 337.7Z" fill="#702a00" stroke="#702a00" stroke-width="0.9"/>
<path d="M420.9 231.8L419.5 237.5L417.9 243.3L416.1 249.2L434.9 250.9L454.6 253.7L474.8 257.7L477.3 249.7L479.5 241.9L481.3 234.1L460.8 232.4L440.5 231.4Z" fill="#e50c00" stroke="#e50c00" stroke-width="0.9"/>
<path d="M358.9 355.8L354.7 360.2L350.5 364.3L346.3 368.1L356.7 385.1L367.7 401.7L378.7 418.1L384.4 413.0L390.0 407.5L395.5 401.7L382.1 386.5L369.1 371.1Z" fill="#bf0a00" stroke="#bf0a00" stroke-width="0.9"/>
<path d="M602.1 269.7L599.8 279.8L597.0 290.1L593.8 300.7L612.0 309.4L628.9 318.9L645.2 328.5L648.7 317.6L651.9 306.8L654.6 296.3L638.3 286.5L620.6 277.7Z" fill="#962700" stroke="#962700" stroke-width="0.9"/>
<path d="M484.8 485.8L477.1 493.7L469.4 501.1L461.7 508.0L477.5 520.9L493.6 533.2L509.9 545.1L518.0 538.3L526.0 531.1L534.2 523.6L517.5 510.8L501.1 498.3Z" fill="#5e1800" stroke="#5e1800" stroke-width="0.9"/>
<path d="M634.7 361.0L631.1 372.1L627.4 383.5L623.9 395.4L643.8 405.9L661.8 416.4L678.8 426.8L683.9 414.3L686.5 401.9L689.0 390.0L671.3 379.9L653.2 370.2Z" fill="#6b2900" stroke="#6b2900" stroke-width="0.9"/>
<path d="M583.1 466.5L574.8 476.6L566.6 486.3L558.5 495.9L575.9 507.0L593.4 517.8L610.7 527.6L619.2 518.1L627.7 508.2L636.1 497.8L618.8 488.0L601.1 477.5Z" fill="#521f00" stroke="#521f00" stroke-width="0.9"/>
<path d="M416.1 249.2L414.0 255.3L411.8 261.5L409.4 267.8L427.2 271.7L445.8 276.5L465.1 282.2L468.6 273.9L471.9 265.8L474.8 257.7L454.6 253.7L434.9 250.9Z" fill="#e30b00" stroke="#e30b00" stroke-width="0.9"/>
<path d="M370.9 341.2L367.0 346.3L363.0 351.2L358.9 355.8L369.1 371.1L382.1 386.5L395.5 401.7L400.8 395.5L405.9 388.9L410.5 382.0L396.1 368.2L383.1 354.6Z" fill="#c70a00" stroke="#c70a00" stroke-width="0.9"/>
<path d="M481.3 234.1L479.5 241.9L477.3 249.7L474.8 257.7L495.1 262.3L515.6 267.9L536.1 274.6L539.0 265.0L541.5 255.5L543.7 246.4L523.0 241.2L502.0 236.8Z" fill="#d11400" stroke="#d11400" stroke-width="0.9"/>
<path d="M395.5 401.7L390.0 407.5L384.4 413.0L378.7 418.1L390.3 434.4L403.8 450.0L418.1 464.9L424.9 458.8L431.7 452.2L438.4 445.3L422.8 431.4L408.8 416.6Z" fill="#a21000" stroke="#a21000" stroke-width="0.9"/>
<path d="M543.7 246.4L541.5 255.5L539.0 265.0L536.1 274.6L556.1 283.0L575.2 292.1L593.8 300.7L597.0 290.1L599.8 279.8L602.1 269.7L583.2 261.8L563.8 253.8Z" fill="#b61f00" stroke="#b61f00" stroke-width="0.9"/>
<path d="M438.4 445.3L431.7 452.2L424.9 458.8L418.1 464.9L432.0 479.8L446.4 494.4L461.7 508.0L469.4 501.1L477.1 493.7L484.8 485.8L468.8 472.9L453.5 459.1Z" fill="#821600" stroke="#821600" stroke-width="0.9"/>
<path d="M623.9 395.4L620.0 407.9L613.9 420.4L606.7 432.5L624.8 443.2L642.3 453.5L659.1 463.4L666.0 451.3L673.0 439.2L678.8 426.8L661.8 416.4L643.8 405.9Z" fill="#652600" stroke="#652600" stroke-width="0.9"/>
<path d="M606.7 432.5L599.4 444.6L591.3 455.8L583.1 466.5L601.1 477.5L618.8 488.0L636.1 497.8L644.3 487.0L652.1 475.5L659.1 463.4L642.3 453.5L624.8 443.2Z" fill="#5c2300" stroke="#5c2300" stroke-width="0.9"/>
<path d="M593.8 300.7L590.3 311.4L586.3 322.2L582.0 333.2L599.3 342.9L616.2 352.3L634.7 361.0L638.0 350.2L641.5 339.4L645.2 328.5L628.9 318.9L612.0 309.4Z" fill="#942600" stroke="#942600" stroke-width="0.9"/>
<path d="M507.6 459.7L500.1 468.8L492.5 477.5L484.8 485.8L501.1 498.3L517.5 510.8L534.2 523.6L542.4 515.2L550.5 505.6L558.5 495.9L541.3 485.0L524.3 472.1Z" fill="#6b1b00" stroke="#6b1b00" stroke-width="0.9"/>
<path d="M409.4 267.8L406.9 274.2L404.3 280.7L401.7 287.3L418.0 293.5L435.1 300.4L453.1 308.0L457.3 299.3L461.3 290.7L465.1 282.2L445.8 276.5L427.2 271.7Z" fill="#e00b00" stroke="#e00b00" stroke-width="0.9"/>
<path d="M382.0 324.5L378.3 330.3L374.6 335.8L370.9 341.2L383.1 354.6L396.1 368.2L410.5 382.0L415.5 374.7L420.9 367.2L426.1 359.5L410.5 347.5L395.7 335.8Z" fill="#cf0a00" stroke="#cf0a00" stroke-width="0.9"/>
<path d="M401.7 287.3L398.8 293.8L395.8 300.2L392.5 306.5L407.7 315.4L423.6 324.8L440.3 334.6L444.8 325.9L448.9 317.0L453.1 308.0L435.1 300.4L418.0 293.5Z" fill="#dc0b00" stroke="#dc0b00" stroke-width="0.9"/>
<path d="M392.5 306.5L389.1 312.6L385.6 318.6L382.0 324.5L395.7 335.8L410.5 347.5L426.1 359.5L430.9 351.4L435.6 343.1L440.3 334.6L423.6 324.8L407.7 315.4Z" fill="#d60b00" stroke="#d60b00" stroke-width="0.9"/>
<path d="M474.8 257.7L471.9 265.8L468.6 273.9L465.1 282.2L485.0 289.0L505.0 296.3L525.0 304.4L529.1 294.4L532.8 284.4L536.1 274.6L515.6 267.9L495.1 262.3Z" fill="#d01400" stroke="#d01400" stroke-width="0.9"/>
<path d="M410.5 382.0L405.9 388.9L400.8 395.5L395.5 401.7L408.8 416.6L422.8 431.4L438.4 445.3L445.1 437.9L451.6 430.3L458.0 422.2L442.0 409.0L426.5 395.6Z" fill="#ad1100" stroke="#ad1100" stroke-width="0.9"/>
<path d="M536.1 274.6L532.8 284.4L529.1 294.4L525.0 304.4L544.8 313.4L563.7 323.9L582.0 333.2L586.3 322.2L590.3 311.4L593.8 300.7L575.2 292.1L556.1 283.0Z" fill="#b51e00" stroke="#b51e00" stroke-width="0.9"/>
<path d="M458.0 422.2L451.6 430.3L445.1 437.9L438.4 445.3L453.5 459.1L468.8 472.9L484.8 485.8L492.5 477.5L500.1 468.8L507.6 459.7L490.9 447.5L474.8 434.7Z" fill="#8e1800" stroke="#8e1800" stroke-width="0.9"/>
<path d="M582.0 333.2L577.3 344.2L572.2 355.3L566.7 366.5L584.4 376.0L604.0 385.4L623.9 395.4L627.4 383.5L631.1 372.1L634.7 361.0L616.2 352.3L599.3 342.9Z" fill="#902500" stroke="#902500" stroke-width="0.9"/>
<path d="M529.3 430.5L522.2 440.5L514.9 450.3L507.6 459.7L524.3 472.1L541.3 485.0L558.5 495.9L566.6 486.3L574.8 476.6L583.1 466.5L564.8 454.8L546.8 442.7Z" fill="#761e00" stroke="#761e00" stroke-width="0.9"/>
<path d="M465.1 282.2L461.3 290.7L457.3 299.3L453.1 308.0L471.8 316.3L491.0 325.2L510.6 334.9L515.8 324.6L520.6 314.4L525.0 304.4L505.0 296.3L485.0 289.0Z" fill="#cc1400" stroke="#cc1400" stroke-width="0.9"/>
<path d="M426.1 359.5L420.9 367.2L415.5 374.7L410.5 382.0L426.5 395.6L442.0 409.0L458.0 422.2L464.4 413.8L470.9 404.9L477.1 395.8L459.0 383.7L442.2 371.5Z" fill="#b71200" stroke="#b71200" stroke-width="0.9"/>
<path d="M566.7 366.5L560.9 377.5L555.5 388.0L550.2 399.3L569.3 410.5L588.2 421.6L606.7 432.5L613.9 420.4L620.0 407.9L623.9 395.4L604.0 385.4L584.4 376.0Z" fill="#892300" stroke="#892300" stroke-width="0.9"/>
<path d="M550.2 399.3L543.1 410.0L536.2 420.5L529.3 430.5L546.8 442.7L564.8 454.8L583.1 466.5L591.3 455.8L599.4 444.6L606.7 432.5L588.2 421.6L569.3 410.5Z" fill="#812100" stroke="#812100" stroke-width="0.9"/>
<path d="M525.0 304.4L520.6 314.4L515.8 324.6L510.6 334.9L530.1 344.9L549.1 356.0L566.7 366.5L572.2 355.3L577.3 344.2L582.0 333.2L563.7 323.9L544.8 313.4Z" fill="#b11e00" stroke="#b11e00" stroke-width="0.9"/>
<path d="M477.1 395.8L470.9 404.9L464.4 413.8L458.0 422.2L474.8 434.7L490.9 447.5L507.6 459.7L514.9 450.3L522.2 440.5L529.3 430.5L512.1 419.0L494.5 407.6Z" fill="#991a00" stroke="#991a00" stroke-width="0.9"/>
<path d="M453.1 308.0L448.9 317.0L444.8 325.9L440.3 334.6L457.7 344.8L475.6 355.4L493.9 366.1L499.3 355.4L505.0 345.0L510.6 334.9L491.0 325.2L471.8 316.3Z" fill="#c71300" stroke="#c71300" stroke-width="0.9"/>
<path d="M440.3 334.6L435.6 343.1L430.9 351.4L426.1 359.5L442.2 371.5L459.0 383.7L477.1 395.8L482.4 386.3L488.3 376.4L493.9 366.1L475.6 355.4L457.7 344.8Z" fill="#c01200" stroke="#c01200" stroke-width="0.9"/>
<path d="M510.6 334.9L505.0 345.0L499.3 355.4L493.9 366.1L512.5 377.1L531.2 388.1L550.2 399.3L555.5 388.0L560.9 377.5L566.7 366.5L549.1 356.0L530.1 344.9Z" fill="#aa1d00" stroke="#aa1d00" stroke-width="0.9"/>
<path d="M493.9 366.1L488.3 376.4L482.4 386.3L477.1 395.8L494.5 407.6L512.1 419.0L529.3 430.5L536.2 420.5L543.1 410.0L550.2 399.3L531.2 388.1L512.5 377.1Z" fill="#a21b00" stroke="#a21b00" stroke-width="0.9"/></g>
<path d="M740.2 290.4L742.0 293.0L743.8 295.6L745.6 298.2L747.4 300.7L749.1 303.2L750.9 305.8L752.7 308.3L754.4 310.8L756.2 313.3L757.9 315.9L759.6 318.5L761.2 321.0L762.9 323.7L764.4 326.3L766.0 329.0L767.5 331.7L769.0 334.5L770.5 337.3L771.9 340.0L773.4 342.9L774.8 345.7L776.1 348.6L777.5 351.4L778.8 354.3L780.1 357.2L781.3 360.2L782.6 363.1L783.8 366.0L785.0 369.0L786.2 372.0L787.3 375.1L788.5 378.3L789.7 381.5L790.8 384.8L791.9 388.0L792.9 391.2L794.0 394.5L794.9 397.6L795.9 400.7L796.8 403.7L797.6 406.6L798.3 409.4L799.0 412.0L799.6 414.4L800.2 416.6L800.7 418.6L801.2 420.5L801.7 422.2L802.0 423.9L802.4 425.6L802.7 427.3L802.9 429.1L803.0 430.9L803.1 432.9L803.1 435.0L803.1 437.4L803.0 440.0L802.9 442.8L802.7 445.7L802.6 448.8L802.4 452.0L802.1 455.3L801.8 458.6L801.4 462.1L800.9 465.7L800.3 469.4L799.6 473.1L798.7 477.0L797.7 480.9L796.4 484.9L795.0 489.0L793.4 493.2L791.6 497.7L789.6 502.4L787.5 507.3L785.2 512.2L782.8 517.3L780.2 522.3L777.6 527.4L774.9 532.4L772.0 537.3L769.1 542.0L766.1 546.6L763.1 550.9L760.0 555.0L756.8 558.9L753.6 562.6L750.2 566.2L746.8 569.7L743.3 573.1L739.6 576.3L735.9 579.5L732.2 582.6L728.3 585.5L724.4 588.4L720.4 591.2L716.3 593.9L712.2 596.5L708.0 599.0L703.8 601.5L699.5 603.8L695.1 606.1L690.7 608.3L686.2 610.4L681.6 612.4L676.9 614.3L672.2 616.1L667.4 617.9L662.5 619.5L657.5 621.0L652.4 622.4L647.3 623.8L642.0 625.0L636.5 626.1L630.7 627.1L624.6 628.0L618.4 628.8L612.0 629.5L605.6 630.1L599.1 630.6L592.7 631.0L586.5 631.3L580.4 631.6" fill="none" stroke="#B8C840" stroke-width="0.9" stroke-dasharray="1 3" opacity="0.7"/>
<path d="M296.1 738.9L327 706.5M322.5 707.2L327.4 706.2L327 711.2" stroke="#E88A8A" stroke-width="1.6" fill="none"/>
<path d="M341 678.8L335.7 709.1M325.9 695.4L350.8 693.5" stroke="#E88A8A" stroke-width="1.6" fill="none"/>
<path d="M296.1 738.9L279.5 715M278 720.3L279.5 714.5L284 714.5" stroke="#7EF07E" stroke-width="1.6" fill="none"/>
<path d="M272.1 705.2L277 688.6M258.5 707.6L272.1 705.2L278 712.5" stroke="#7EF07E" stroke-width="1.6" fill="none"/>
<path d="M296.1 738.9L268 720.5M266.5 716.5L268 721L271.5 722.5" stroke="#6E7EEE" stroke-width="1.6" fill="none"/>
<path d="M243.8 698.8L253.1 713M253.1 713L259 709.5M259 709.5L268.7 723.3M245 700L251 712" stroke="#6E7EEE" stroke-width="1.5" fill="none"/>
</g></svg>
<div class="hl" style="left:0;top:928px;width:1256px;background:#A8A595"></div>
<div class="hl" style="left:0;top:929px;width:1256px;background:#fff"></div>
<div class="a" style="left:5px;top:840px;width:1245px;height:84px;background:#fff;border-left:1px solid #716F64;border-top:1px solid #716F64;border-right:1px solid #F1EFE2;border-bottom:1px solid #F1EFE2"></div>
<div class="a" style="left:6px;top:841px;width:1243px;height:16px;background:#ECE9D8"></div>
<div class="hl" style="left:6px;top:857px;width:1243px;background:#716F64"></div>
<div class="hl" style="left:6px;top:873px;width:1243px;background:#ECE9D8"></div>
<div class="hl" style="left:6px;top:887px;width:1243px;background:#ECE9D8"></div>
<div class="hl" style="left:6px;top:901px;width:1243px;background:#ECE9D8"></div>
<div class="hl" style="left:6px;top:915px;width:1243px;background:#ECE9D8"></div>
<div class="a" style="left:6px;top:841px;width:33px;height:16px;border-top:1px solid #fff;border-left:1px solid #fff;border-right:1px solid #ACA899;border-bottom:1px solid #ACA899"></div>
<div class="vl" style="left:38px;top:858px;height:65px;background:#ECE9D8"></div>
<div class="t" style="left:6px;top:844px;width:33px;text-align:center;font-size:11px">Port</div>
<div class="t" style="left:11px;top:861px;font-size:11px">1</div>
<div class="t" style="left:11px;top:875px;font-size:11px">Sum</div>
<div class="a" style="left:39px;top:841px;width:55px;height:16px;border-top:1px solid #fff;border-left:1px solid #fff;border-right:1px solid #ACA899;border-bottom:1px solid #ACA899"></div>
<div class="vl" style="left:93px;top:858px;height:65px;background:#ECE9D8"></div>
<div class="t" style="left:39px;top:844px;width:55px;text-align:center;font-size:11px">Mag(Src)</div>
<div class="t" style="left:39px;top:861px;width:55px;text-align:center;font-size:11px">1</div>
<div class="a" style="left:94px;top:841px;width:53px;height:16px;border-top:1px solid #fff;border-left:1px solid #fff;border-right:1px solid #ACA899;border-bottom:1px solid #ACA899"></div>
<div class="vl" style="left:146px;top:858px;height:65px;background:#ECE9D8"></div>
<div class="t" style="left:94px;top:844px;width:53px;text-align:center;font-size:11px">Ang(Src)</div>
<div class="t" style="left:94px;top:861px;width:53px;text-align:center;font-size:11px">0.000</div>
<div class="a" style="left:147px;top:841px;width:54px;height:16px;border-top:1px solid #fff;border-left:1px solid #fff;border-right:1px solid #ACA899;border-bottom:1px solid #ACA899"></div>
<div class="vl" style="left:200px;top:858px;height:65px;background:#ECE9D8"></div>
<div class="t" style="left:147px;top:844px;width:54px;text-align:center;font-size:11px">Mag(Inc)</div>
<div class="t" style="left:147px;top:861px;width:54px;text-align:center;font-size:11px">1</div>
<div class="a" style="left:201px;top:841px;width:53px;height:16px;border-top:1px solid #fff;border-left:1px solid #fff;border-right:1px solid #ACA899;border-bottom:1px solid #ACA899"></div>
<div class="vl" style="left:253px;top:858px;height:65px;background:#ECE9D8"></div>
<div class="t" style="left:201px;top:844px;width:53px;text-align:center;font-size:11px">Ang(Inc)</div>
<div class="t" style="left:201px;top:861px;width:53px;text-align:center;font-size:11px">0.000</div>
<div class="a" style="left:254px;top:841px;width:55px;height:16px;border-top:1px solid #fff;border-left:1px solid #fff;border-right:1px solid #ACA899;border-bottom:1px solid #ACA899"></div>
<div class="vl" style="left:308px;top:858px;height:65px;background:#ECE9D8"></div>
<div class="t" style="left:254px;top:844px;width:55px;text-align:center;font-size:11px">Mag(Ref)</div>
<div class="t" style="left:254px;top:861px;width:55px;text-align:center;font-size:11px">0.04392</div>
<div class="a" style="left:309px;top:841px;width:54px;height:16px;border-top:1px solid #fff;border-left:1px solid #fff;border-right:1px solid #ACA899;border-bottom:1px solid #ACA899"></div>
<div class="vl" style="left:362px;top:858px;height:65px;background:#ECE9D8"></div>
<div class="t" style="left:309px;top:844px;width:54px;text-align:center;font-size:11px">Ang(Ref)</div>
<div class="t" style="left:309px;top:861px;width:54px;text-align:center;font-size:11px">75.188</div>
<div class="a" style="left:363px;top:841px;width:45px;height:16px;border-top:1px solid #fff;border-left:1px solid #fff;border-right:1px solid #ACA899;border-bottom:1px solid #ACA899"></div>
<div class="vl" style="left:407px;top:858px;height:65px;background:#ECE9D8"></div>
<div class="t" style="left:363px;top:844px;width:45px;text-align:center;font-size:11px">Mag(V)</div>
<div class="t" style="left:363px;top:861px;width:45px;text-align:center;font-size:11px">1.012</div>
<div class="a" style="left:408px;top:841px;width:45px;height:16px;border-top:1px solid #fff;border-left:1px solid #fff;border-right:1px solid #ACA899;border-bottom:1px solid #ACA899"></div>
<div class="vl" style="left:452px;top:858px;height:65px;background:#ECE9D8"></div>
<div class="t" style="left:408px;top:844px;width:45px;text-align:center;font-size:11px">Ang(V)</div>
<div class="t" style="left:408px;top:861px;width:45px;text-align:center;font-size:11px">2.404</div>
<div class="a" style="left:453px;top:841px;width:51px;height:16px;border-top:1px solid #fff;border-left:1px solid #fff;border-right:1px solid #ACA899;border-bottom:1px solid #ACA899"></div>
<div class="vl" style="left:503px;top:858px;height:65px;background:#ECE9D8"></div>
<div class="t" style="left:453px;top:844px;width:51px;text-align:center;font-size:11px">Mag(I)</div>
<div class="t" style="left:453px;top:861px;width:51px;text-align:center;font-size:11px">0.01979</div>
<div class="a" style="left:504px;top:841px;width:43px;height:16px;border-top:1px solid #fff;border-left:1px solid #fff;border-right:1px solid #ACA899;border-bottom:1px solid #ACA899"></div>
<div class="vl" style="left:546px;top:858px;height:65px;background:#ECE9D8"></div>
<div class="t" style="left:504px;top:844px;width:43px;text-align:center;font-size:11px">Ang(I)</div>
<div class="t" style="left:504px;top:861px;width:43px;text-align:center;font-size:11px">-2.459</div>
<div class="a" style="left:547px;top:841px;width:43px;height:16px;border-top:1px solid #fff;border-left:1px solid #fff;border-right:1px solid #ACA899;border-bottom:1px solid #ACA899"></div>
<div class="vl" style="left:589px;top:858px;height:65px;background:#ECE9D8"></div>
<div class="t" style="left:547px;top:844px;width:43px;text-align:center;font-size:11px">Re(Zs)</div>
<div class="t" style="left:547px;top:861px;width:43px;text-align:center;font-size:11px">50</div>
<div class="a" style="left:590px;top:841px;width:41px;height:16px;border-top:1px solid #fff;border-left:1px solid #fff;border-right:1px solid #ACA899;border-bottom:1px solid #ACA899"></div>
<div class="vl" style="left:630px;top:858px;height:65px;background:#ECE9D8"></div>
<div class="t" style="left:590px;top:844px;width:41px;text-align:center;font-size:11px">Im(Zs)</div>
<div class="t" style="left:590px;top:861px;width:41px;text-align:center;font-size:11px">0</div>
<div class="a" style="left:631px;top:841px;width:25px;height:16px;border-top:1px solid #fff;border-left:1px solid #fff;border-right:1px solid #ACA899;border-bottom:1px solid #ACA899"></div>
<div class="vl" style="left:655px;top:858px;height:65px;background:#ECE9D8"></div>
<div class="t" style="left:631px;top:844px;width:25px;text-align:center;font-size:11px">Zc</div>
<div class="t" style="left:631px;top:861px;width:25px;text-align:center;font-size:11px">50</div>
<div class="a" style="left:656px;top:841px;width:33px;height:16px;border-top:1px solid #fff;border-left:1px solid #fff;border-right:1px solid #ACA899;border-bottom:1px solid #ACA899"></div>
<div class="vl" style="left:688px;top:858px;height:65px;background:#ECE9D8"></div>
<div class="t" style="left:656px;top:844px;width:33px;text-align:center;font-size:11px">Pinc</div>
<div class="t" style="left:656px;top:861px;width:33px;text-align:center;font-size:11px">0.01</div>
<div class="t" style="left:656px;top:875px;width:33px;text-align:center;font-size:11px">0.01</div>
<div class="a" style="left:689px;top:841px;width:66px;height:16px;border-top:1px solid #fff;border-left:1px solid #fff;border-right:1px solid #ACA899;border-bottom:1px solid #ACA899"></div>
<div class="vl" style="left:754px;top:858px;height:65px;background:#ECE9D8"></div>
<div class="t" style="left:689px;top:844px;width:66px;text-align:center;font-size:11px">Pref</div>
<div class="t" style="left:689px;top:861px;width:66px;text-align:center;font-size:11px">1.929e-005</div>
<div class="t" style="left:689px;top:875px;width:66px;text-align:center;font-size:11px">1.929e-005</div>
<div class="a" style="left:755px;top:841px;width:63px;height:16px;border-top:1px solid #fff;border-left:1px solid #fff;border-right:1px solid #ACA899;border-bottom:1px solid #ACA899"></div>
<div class="vl" style="left:817px;top:858px;height:65px;background:#ECE9D8"></div>
<div class="t" style="left:755px;top:844px;width:63px;text-align:center;font-size:11px">Pin</div>
<div class="t" style="left:755px;top:861px;width:63px;text-align:center;font-size:11px">0.0008492</div>
<div class="t" style="left:755px;top:875px;width:63px;text-align:center;font-size:11px">0.0008492</div>
<div class="a" style="left:818px;top:841px;width:68px;height:16px;border-top:1px solid #fff;border-left:1px solid #fff;border-right:1px solid #ACA899;border-bottom:1px solid #ACA899"></div>
<div class="vl" style="left:885px;top:858px;height:65px;background:#ECE9D8"></div>
<div class="t" style="left:818px;top:844px;width:68px;text-align:center;font-size:11px">Re(Zactive)</div>
<div class="t" style="left:818px;top:861px;width:68px;text-align:center;font-size:11px">50.95</div>
<div class="a" style="left:886px;top:841px;width:65px;height:16px;border-top:1px solid #fff;border-left:1px solid #fff;border-right:1px solid #ACA899;border-bottom:1px solid #ACA899"></div>
<div class="vl" style="left:950px;top:858px;height:65px;background:#ECE9D8"></div>
<div class="t" style="left:886px;top:844px;width:65px;text-align:center;font-size:11px">Im(Zactive)</div>
<div class="t" style="left:886px;top:861px;width:65px;text-align:center;font-size:11px">4.335</div>
<div class="a" style="left:951px;top:841px;width:298px;height:16px;border-top:1px solid #fff;border-left:1px solid #fff;border-right:1px solid #ACA899;border-bottom:1px solid #ACA899"></div>
<div class="a" style="left:107px;top:932px;width:205px;height:16px;border-left:1px solid #ACA899;border-top:1px solid #ACA899;border-right:1px solid #fff;border-bottom:1px solid #fff"></div><div class="t" style="left:109px;top:935px;font-size:11px">Angles : (-51.2512, -10.0389, 47.1082)</div>
<div class="a" style="left:314px;top:932px;width:167px;height:16px;border-left:1px solid #ACA899;border-top:1px solid #ACA899;border-right:1px solid #fff;border-bottom:1px solid #fff"></div><div class="t" style="left:316px;top:935px;font-size:11px">Scale : (100%, 100%, 100%)</div>
<div class="a" style="left:483px;top:932px;width:56px;height:16px;border-left:1px solid #ACA899;border-top:1px solid #ACA899;border-right:1px solid #fff;border-bottom:1px solid #fff"></div><div class="t" style="left:485px;top:935px;font-size:11px">150%</div>
<div class="hl" style="left:1256px;top:946px;width:23px;background:#ACA899"></div>
<div class="t" style="left:1px;top:952px;font-size:11px">For Help, press F1</div>
<div class="a" style="left:697px;top:950px;width:35px;height:16px;border-left:1px solid #ACA899;border-top:1px solid #ACA899;border-right:1px solid #fff;border-bottom:1px solid #fff"></div><div class="t" style="left:699px;top:953px;font-size:11px">mm</div>
<div class="a" style="left:734px;top:950px;width:59px;height:16px;border-left:1px solid #ACA899;border-top:1px solid #ACA899;border-right:1px solid #fff;border-bottom:1px solid #fff"></div><div class="t" style="left:736px;top:953px;font-size:11px">6.54355%</div>
<div class="a" style="left:796px;top:950px;width:78px;height:16px;border-left:1px solid #ACA899;border-top:1px solid #ACA899;border-right:1px solid #fff;border-bottom:1px solid #fff"></div><div class="t" style="left:798px;top:953px;font-size:11px">R2_COPYPEN</div>
<div class="a" style="left:876px;top:950px;width:125px;height:16px;border-left:1px solid #ACA899;border-top:1px solid #ACA899;border-right:1px solid #fff;border-bottom:1px solid #fff"></div><div class="t" style="left:878px;top:953px;font-size:11px">No Plane Wave Defined</div>
<div class="a" style="left:1004px;top:950px;width:256px;height:16px;border-left:1px solid #ACA899;border-top:1px solid #ACA899;border-right:1px solid #fff;border-bottom:1px solid #fff"></div>
<svg style="left:1264px;top:950px" width="15" height="14"><path d="M13 2L2 13M13 6L6 13M13 10L10 13" stroke="#ACA899" stroke-width="1.2"/><path d="M14 3L3 14M14 7L7 14M14 11L11 14" stroke="#fff" stroke-width="1"/></svg>
</body></html>
